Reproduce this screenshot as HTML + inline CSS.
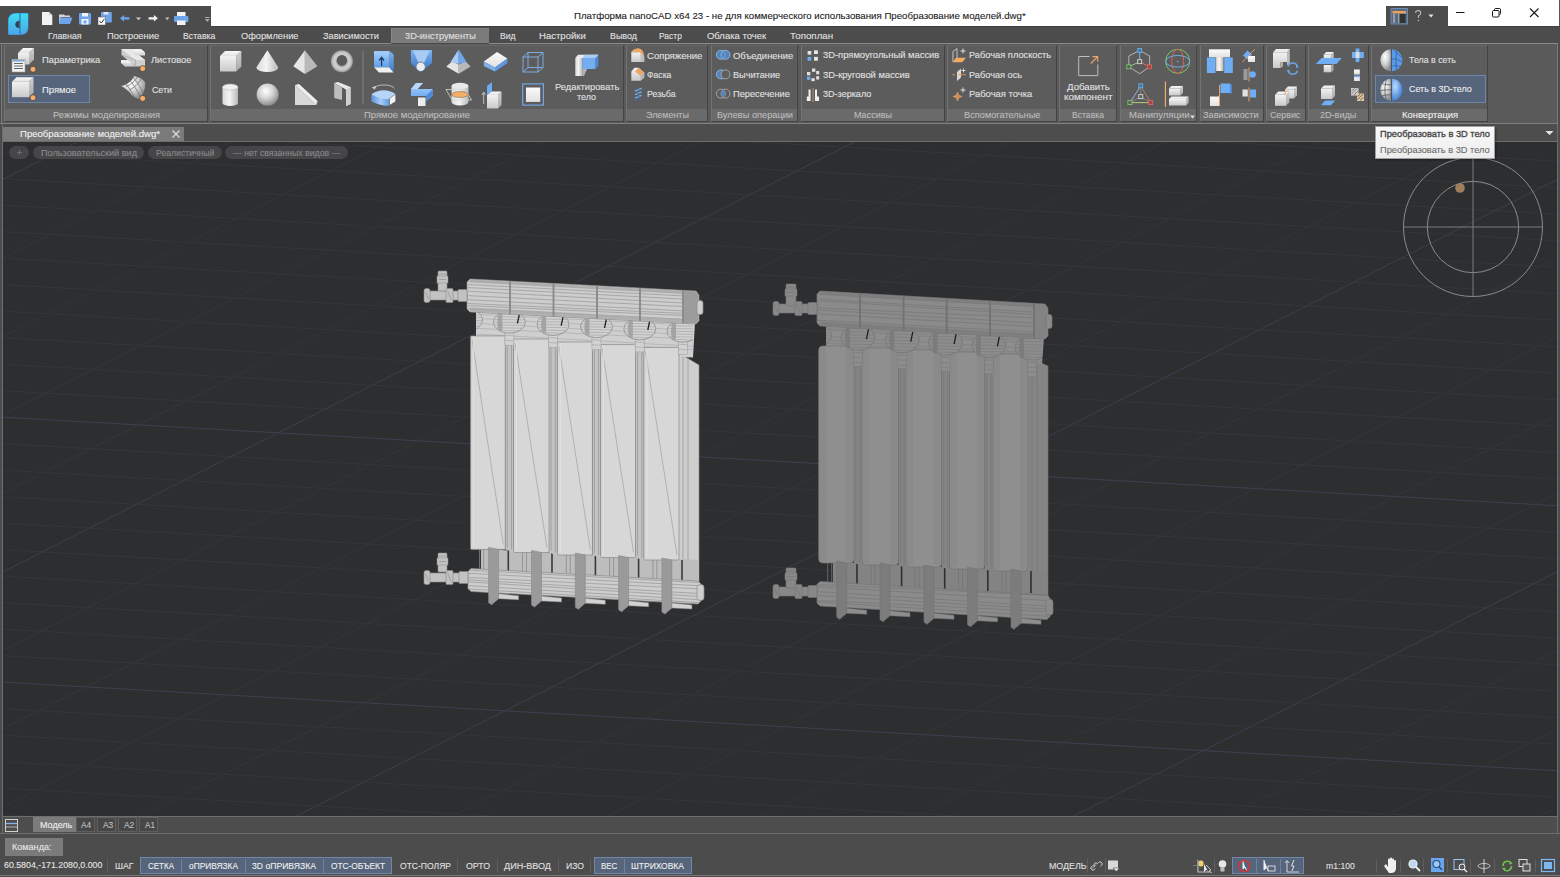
<!DOCTYPE html>
<html><head><meta charset="utf-8"><style>
html,body{margin:0;padding:0;width:1560px;height:877px;overflow:hidden;background:#4c4c4c;}
body>div,body>svg{position:absolute;}
.t{position:absolute;white-space:pre;line-height:14px;height:14px;font-family:"Liberation Sans",sans-serif;transform-origin:0 0;-webkit-text-stroke:0.1px currentColor;}
</style></head><body>
<div style="left:0px;top:0px;width:1560px;height:26px;background:#ffffff;"></div>
<div style="left:0px;top:6px;width:211px;height:20px;background:#4c4c4c;"></div>
<div style="left:1386px;top:6px;width:62px;height:20px;background:#4c4c4c;"></div>
<div style="left:1559px;top:0px;width:1px;height:44px;background:#5a5a5a;"></div>
<div style="left:0px;top:26px;width:1560px;height:18px;background:#4c4c4c;"></div>
<div style="left:211px;top:26px;width:1175px;height:1px;background:#404040;"></div>
<div style="left:1448px;top:26px;width:112px;height:1px;background:#404040;"></div>
<div style="left:391px;top:28px;width:98px;height:16px;background:#7b7b7b;box-sizing:border-box;border-left:1px solid #888;border-top:1px solid #828282"></div>
<div style="left:0px;top:43px;width:1560px;height:81px;background:#4c4c4c;"></div>
<div style="left:1px;top:44px;width:1557px;height:79px;background:#5a5a5a;"></div>
<div style="left:0px;top:43px;width:391px;height:1px;background:#8a8a8a;"></div>
<div style="left:489px;top:43px;width:1069px;height:1px;background:#8a8a8a;"></div>
<div style="left:1px;top:43px;width:1px;height:81px;background:#7a7a7a;"></div>
<div style="left:1557px;top:43px;width:1px;height:81px;background:#7a7a7a;"></div>
<div style="left:0px;top:123px;width:1558px;height:1px;background:#808080;"></div>
<div style="left:4px;top:45px;width:204px;height:77px;background:#5c5c5c;box-sizing:border-box;border:1px solid #444;border-left-color:#737373;border-top-color:#666"></div>
<div style="left:5px;top:109px;width:202px;height:12px;background:#6a6a6a;"></div>
<div style="left:210px;top:45px;width:414px;height:77px;background:#5c5c5c;box-sizing:border-box;border:1px solid #444;border-left-color:#737373;border-top-color:#666"></div>
<div style="left:211px;top:109px;width:412px;height:12px;background:#6a6a6a;"></div>
<div style="left:626px;top:45px;width:82px;height:77px;background:#5c5c5c;box-sizing:border-box;border:1px solid #444;border-left-color:#737373;border-top-color:#666"></div>
<div style="left:627px;top:109px;width:80px;height:12px;background:#6a6a6a;"></div>
<div style="left:711px;top:45px;width:87px;height:77px;background:#5c5c5c;box-sizing:border-box;border:1px solid #444;border-left-color:#737373;border-top-color:#666"></div>
<div style="left:712px;top:109px;width:85px;height:12px;background:#6a6a6a;"></div>
<div style="left:801px;top:45px;width:144px;height:77px;background:#5c5c5c;box-sizing:border-box;border:1px solid #444;border-left-color:#737373;border-top-color:#666"></div>
<div style="left:802px;top:109px;width:142px;height:12px;background:#6a6a6a;"></div>
<div style="left:947px;top:45px;width:110px;height:77px;background:#5c5c5c;box-sizing:border-box;border:1px solid #444;border-left-color:#737373;border-top-color:#666"></div>
<div style="left:948px;top:109px;width:108px;height:12px;background:#6a6a6a;"></div>
<div style="left:1059px;top:45px;width:58px;height:77px;background:#5c5c5c;box-sizing:border-box;border:1px solid #444;border-left-color:#737373;border-top-color:#666"></div>
<div style="left:1060px;top:109px;width:56px;height:12px;background:#6a6a6a;"></div>
<div style="left:1120px;top:45px;width:77px;height:77px;background:#5c5c5c;box-sizing:border-box;border:1px solid #444;border-left-color:#737373;border-top-color:#666"></div>
<div style="left:1121px;top:109px;width:75px;height:12px;background:#6a6a6a;"></div>
<div style="left:1200px;top:45px;width:64px;height:77px;background:#5c5c5c;box-sizing:border-box;border:1px solid #444;border-left-color:#737373;border-top-color:#666"></div>
<div style="left:1201px;top:109px;width:62px;height:12px;background:#6a6a6a;"></div>
<div style="left:1266px;top:45px;width:40px;height:77px;background:#5c5c5c;box-sizing:border-box;border:1px solid #444;border-left-color:#737373;border-top-color:#666"></div>
<div style="left:1267px;top:109px;width:38px;height:12px;background:#6a6a6a;"></div>
<div style="left:1308px;top:45px;width:61px;height:77px;background:#5c5c5c;box-sizing:border-box;border:1px solid #444;border-left-color:#737373;border-top-color:#666"></div>
<div style="left:1309px;top:109px;width:59px;height:12px;background:#6a6a6a;"></div>
<div style="left:1371px;top:45px;width:117px;height:77px;background:#5c5c5c;box-sizing:border-box;border:1px solid #444;border-left-color:#737373;border-top-color:#666"></div>
<div style="left:1372px;top:109px;width:115px;height:12px;background:#6a6a6a;"></div>
<div style="left:8px;top:75px;width:82px;height:28px;background:#56657b;box-sizing:border-box;border:1px solid #6d86a8"></div>
<div style="left:1375px;top:75px;width:111px;height:28px;background:#56657b;box-sizing:border-box;border:1px solid #6d86a8"></div>
<div style="left:0px;top:124px;width:1560px;height:18px;background:#4d4d4d;"></div>
<div style="left:3px;top:127px;width:181px;height:14px;background:#7b7b7b;"></div>
<div style="left:0px;top:141px;width:1560px;height:676px;background:#4c4c4c;"></div>
<div style="left:3px;top:142px;width:1554px;height:674px;background:#2c2e30;"></div>
<svg width="1555" height="674" viewBox="3 142 1555 674" style="position:absolute;left:3px;top:142px"><path d="M0.0 -139.5L1560.0 -50.6" stroke="#35373b" stroke-width="0.9" opacity="1"/><path d="M0.0 -113.0L1560.0 -24.1" stroke="#35373b" stroke-width="0.9" opacity="1"/><path d="M0.0 -86.5L1560.0 2.4" stroke="#35373b" stroke-width="0.9" opacity="1"/><path d="M0.0 -60.0L1560.0 28.9" stroke="#35373b" stroke-width="0.9" opacity="1"/><path d="M0.0 -33.5L1560.0 55.4" stroke="#35373b" stroke-width="0.9" opacity="1"/><path d="M0.0 -7.0L1560.0 81.9" stroke="#35373b" stroke-width="0.9" opacity="1"/><path d="M0.0 19.5L1560.0 108.4" stroke="#35373b" stroke-width="0.9" opacity="1"/><path d="M0.0 46.0L1560.0 134.9" stroke="#35373b" stroke-width="0.9" opacity="1"/><path d="M0.0 72.5L1560.0 161.4" stroke="#35373b" stroke-width="0.9" opacity="1"/><path d="M0.0 99.0L1560.0 187.9" stroke="#35373b" stroke-width="0.9" opacity="1"/><path d="M0.0 125.5L1560.0 214.4" stroke="#35373b" stroke-width="0.9" opacity="1"/><path d="M0.0 152.0L1560.0 240.9" stroke="#35373b" stroke-width="0.9" opacity="1"/><path d="M0.0 178.5L1560.0 267.4" stroke="#35373b" stroke-width="0.9" opacity="1"/><path d="M0.0 205.0L1560.0 293.9" stroke="#35373b" stroke-width="0.9" opacity="1"/><path d="M0.0 231.5L1560.0 320.4" stroke="#35373b" stroke-width="0.9" opacity="1"/><path d="M0.0 258.0L1560.0 346.9" stroke="#35373b" stroke-width="0.9" opacity="1"/><path d="M0.0 284.5L1560.0 373.4" stroke="#35373b" stroke-width="0.9" opacity="1"/><path d="M0.0 311.0L1560.0 399.9" stroke="#35373b" stroke-width="0.9" opacity="1"/><path d="M0.0 337.5L1560.0 426.4" stroke="#35373b" stroke-width="0.9" opacity="1"/><path d="M0.0 364.0L1560.0 452.9" stroke="#35373b" stroke-width="0.9" opacity="1"/><path d="M0.0 390.5L1560.0 479.4" stroke="#35373b" stroke-width="0.9" opacity="1"/><path d="M0.0 417.0L1560.0 505.9" stroke="#3e4454" stroke-width="0.9" opacity="1"/><path d="M0.0 443.5L1560.0 532.4" stroke="#35373b" stroke-width="0.9" opacity="1"/><path d="M0.0 470.0L1560.0 558.9" stroke="#35373b" stroke-width="0.9" opacity="1"/><path d="M0.0 496.5L1560.0 585.4" stroke="#35373b" stroke-width="0.9" opacity="1"/><path d="M0.0 523.0L1560.0 611.9" stroke="#35373b" stroke-width="0.9" opacity="1"/><path d="M0.0 549.5L1560.0 638.4" stroke="#35373b" stroke-width="0.9" opacity="1"/><path d="M0.0 576.0L1560.0 664.9" stroke="#35373b" stroke-width="0.9" opacity="1"/><path d="M0.0 602.5L1560.0 691.4" stroke="#35373b" stroke-width="0.9" opacity="1"/><path d="M0.0 629.0L1560.0 717.9" stroke="#35373b" stroke-width="0.9" opacity="1"/><path d="M0.0 655.5L1560.0 744.4" stroke="#35373b" stroke-width="0.9" opacity="1"/><path d="M0.0 682.0L1560.0 770.9" stroke="#3e4454" stroke-width="0.9" opacity="1"/><path d="M0.0 708.5L1560.0 797.4" stroke="#35373b" stroke-width="0.9" opacity="1"/><path d="M0.0 735.0L1560.0 823.9" stroke="#35373b" stroke-width="0.9" opacity="1"/><path d="M0.0 761.5L1560.0 850.4" stroke="#35373b" stroke-width="0.9" opacity="1"/><path d="M0.0 788.0L1560.0 876.9" stroke="#35373b" stroke-width="0.9" opacity="1"/><path d="M0.0 814.5L1560.0 903.4" stroke="#35373b" stroke-width="0.9" opacity="1"/><path d="M0.0 841.0L1560.0 929.9" stroke="#35373b" stroke-width="0.9" opacity="1"/><path d="M0.0 867.5L1560.0 956.4" stroke="#35373b" stroke-width="0.9" opacity="1"/><path d="M0.0 894.0L1560.0 982.9" stroke="#35373b" stroke-width="0.9" opacity="1"/><path d="M0.0 920.5L1560.0 1009.4" stroke="#35373b" stroke-width="0.9" opacity="1"/><path d="M0.0 947.0L1560.0 1035.9" stroke="#35373b" stroke-width="0.9" opacity="1"/><path d="M0.0 -211.7L1560.0 -999.5" stroke="#3c4150" stroke-width="0.9" opacity="1"/><path d="M0.0 -133.2L1560.0 -921.0" stroke="#35373b" stroke-width="0.9" opacity="1"/><path d="M0.0 -54.7L1560.0 -842.5" stroke="#35373b" stroke-width="0.9" opacity="1"/><path d="M0.0 23.8L1560.0 -764.0" stroke="#35373b" stroke-width="0.9" opacity="1"/><path d="M0.0 102.3L1560.0 -685.5" stroke="#35373b" stroke-width="0.9" opacity="1"/><path d="M0.0 180.8L1560.0 -607.0" stroke="#3c4150" stroke-width="0.9" opacity="1"/><path d="M0.0 259.3L1560.0 -528.5" stroke="#35373b" stroke-width="0.9" opacity="1"/><path d="M0.0 337.8L1560.0 -450.0" stroke="#35373b" stroke-width="0.9" opacity="1"/><path d="M0.0 416.3L1560.0 -371.5" stroke="#35373b" stroke-width="0.9" opacity="1"/><path d="M0.0 494.8L1560.0 -293.0" stroke="#35373b" stroke-width="0.9" opacity="1"/><path d="M0.0 573.3L1560.0 -214.5" stroke="#3c4150" stroke-width="0.9" opacity="1"/><path d="M0.0 651.8L1560.0 -136.0" stroke="#35373b" stroke-width="0.9" opacity="1"/><path d="M0.0 730.3L1560.0 -57.5" stroke="#35373b" stroke-width="0.9" opacity="1"/><path d="M0.0 808.8L1560.0 21.0" stroke="#35373b" stroke-width="0.9" opacity="1"/><path d="M0.0 887.3L1560.0 99.5" stroke="#35373b" stroke-width="0.9" opacity="1"/><path d="M0.0 965.8L1560.0 178.0" stroke="#3c4150" stroke-width="0.9" opacity="1"/><path d="M0.0 1044.3L1560.0 256.5" stroke="#35373b" stroke-width="0.9" opacity="1"/><path d="M0.0 1122.8L1560.0 335.0" stroke="#35373b" stroke-width="0.9" opacity="1"/><path d="M0.0 1201.3L1560.0 413.5" stroke="#35373b" stroke-width="0.9" opacity="1"/><path d="M0.0 1279.8L1560.0 492.0" stroke="#35373b" stroke-width="0.9" opacity="1"/><path d="M0.0 1358.3L1560.0 570.5" stroke="#3c4150" stroke-width="0.9" opacity="1"/><path d="M0.0 1436.8L1560.0 649.0" stroke="#35373b" stroke-width="0.9" opacity="1"/><path d="M0.0 1515.3L1560.0 727.5" stroke="#35373b" stroke-width="0.9" opacity="1"/><path d="M0.0 1593.8L1560.0 806.0" stroke="#35373b" stroke-width="0.9" opacity="1"/><path d="M0.0 1672.3L1560.0 884.5" stroke="#35373b" stroke-width="0.9" opacity="1"/><path d="M0.0 1750.8L1560.0 963.0" stroke="#3c4150" stroke-width="0.9" opacity="1"/><path d="M0.0 1829.3L1560.0 1041.5" stroke="#35373b" stroke-width="0.9" opacity="1"/><path d="M0.0 1907.8L1560.0 1120.0" stroke="#35373b" stroke-width="0.9" opacity="1"/><path d="M0.0 1986.3L1560.0 1198.5" stroke="#35373b" stroke-width="0.9" opacity="1"/><path d="M0.0 2064.8L1560.0 1277.0" stroke="#35373b" stroke-width="0.9" opacity="1"/><path d="M0.0 2143.3L1560.0 1355.5" stroke="#3c4150" stroke-width="0.9" opacity="1"/><path d="M0.0 2221.8L1560.0 1434.0" stroke="#35373b" stroke-width="0.9" opacity="1"/><path d="M0.0 2300.3L1560.0 1512.5" stroke="#35373b" stroke-width="0.9" opacity="1"/><path d="M0.0 2378.8L1560.0 1591.0" stroke="#35373b" stroke-width="0.9" opacity="1"/><path d="M0.0 2457.3L1560.0 1669.5" stroke="#35373b" stroke-width="0.9" opacity="1"/><path d="M0.0 2535.8L1560.0 1748.0" stroke="#3c4150" stroke-width="0.9" opacity="1"/><path d="M0.0 2614.3L1560.0 1826.5" stroke="#35373b" stroke-width="0.9" opacity="1"/><path d="M0.0 2692.8L1560.0 1905.0" stroke="#35373b" stroke-width="0.9" opacity="1"/><path d="M0.0 2771.3L1560.0 1983.5" stroke="#35373b" stroke-width="0.9" opacity="1"/><path d="M0.0 2849.8L1560.0 2062.0" stroke="#35373b" stroke-width="0.9" opacity="1"/><path d="M0.0 2928.3L1560.0 2140.5" stroke="#3c4150" stroke-width="0.9" opacity="1"/><path d="M0.0 3006.8L1560.0 2219.0" stroke="#35373b" stroke-width="0.9" opacity="1"/><path d="M0.0 3085.3L1560.0 2297.5" stroke="#35373b" stroke-width="0.9" opacity="1"/><path d="M0.0 3163.8L1560.0 2376.0" stroke="#35373b" stroke-width="0.9" opacity="1"/><path d="M0.0 3242.3L1560.0 2454.5" stroke="#35373b" stroke-width="0.9" opacity="1"/></svg>
<svg width="1560" height="877" viewBox="0 0 1560 877" style="position:absolute;left:0;top:0"><path d="M677.0 352.0L699.0 365.0L699.0 598.0L677.0 600.0Z" fill="#cecece" stroke="#8a8a8a" stroke-width="0.6" /><path d="M683.0 354.0L683.0 596.0" stroke="#8a8a8a" stroke-width="0.6" opacity="1"/><path d="M688.0 356.0L688.0 596.0" stroke="#8a8a8a" stroke-width="0.6" opacity="1"/><path d="M476.0 310.0L695.0 322.0L693.0 357.4L476.0 345.9Z" fill="#cfcfcf" stroke="none" stroke-width="0.6" /><path d="M477.0 314.3L693.0 325.3" stroke="#8e8e8e" stroke-width="0.6" opacity="0.6"/><path d="M477.0 318.4L693.0 330.5" stroke="#8e8e8e" stroke-width="0.6" opacity="0.6"/><path d="M477.0 323.5L693.0 334.9" stroke="#8e8e8e" stroke-width="0.6" opacity="0.6"/><path d="M477.0 328.4L693.0 339.3" stroke="#8e8e8e" stroke-width="0.6" opacity="0.6"/><path d="M477.0 334.1L693.0 346.3" stroke="#8e8e8e" stroke-width="0.6" opacity="0.6"/><path d="M477.0 337.5L693.0 349.5" stroke="#8e8e8e" stroke-width="0.6" opacity="0.6"/><path d="M481.0 549.0L699.0 560.0L699.0 590.0L481.0 580.0Z" fill="#bdbdbd" stroke="none" stroke-width="0.6" /><path d="M508.3 549.4L508.3 571.4" stroke="#3a3a3a" stroke-width="1.6" opacity="1"/><path d="M479.6 549.4L479.6 569.4" stroke="#8a8a8a" stroke-width="0.8" opacity="1"/><path d="M483.6 549.4L483.6 569.4" stroke="#8a8a8a" stroke-width="0.8" opacity="1"/><path d="M552.0 552.5L552.0 574.5" stroke="#3a3a3a" stroke-width="1.6" opacity="1"/><path d="M522.5 552.5L522.5 572.5" stroke="#8a8a8a" stroke-width="0.8" opacity="1"/><path d="M526.5 552.5L526.5 572.5" stroke="#8a8a8a" stroke-width="0.8" opacity="1"/><path d="M595.4 555.0L595.4 577.0" stroke="#3a3a3a" stroke-width="1.6" opacity="1"/><path d="M566.3 555.0L566.3 575.0" stroke="#8a8a8a" stroke-width="0.8" opacity="1"/><path d="M570.3 555.0L570.3 575.0" stroke="#8a8a8a" stroke-width="0.8" opacity="1"/><path d="M638.6 557.5L638.6 579.5" stroke="#3a3a3a" stroke-width="1.6" opacity="1"/><path d="M609.6 557.5L609.6 577.5" stroke="#8a8a8a" stroke-width="0.8" opacity="1"/><path d="M613.6 557.5L613.6 577.5" stroke="#8a8a8a" stroke-width="0.8" opacity="1"/><path d="M682.0 560.0L682.0 582.0" stroke="#3a3a3a" stroke-width="1.6" opacity="1"/><path d="M652.9 560.0L652.9 580.0" stroke="#8a8a8a" stroke-width="0.8" opacity="1"/><path d="M656.9 560.0L656.9 580.0" stroke="#8a8a8a" stroke-width="0.8" opacity="1"/><path d="M505.3 333.0L513.5 339.0L513.5 552.4L505.3 549.4Z" fill="#c3c3c3" stroke="none" stroke-width="0.6" /><path d="M507.3 343.0L507.3 547.4" stroke="#8a8a8a" stroke-width="0.6" opacity="1"/><path d="M511.5 343.0L511.5 549.4" stroke="#8a8a8a" stroke-width="0.6" opacity="1"/><path d="M549.0 336.0L557.3 342.0L557.3 555.5L549.0 552.5Z" fill="#c3c3c3" stroke="none" stroke-width="0.6" /><path d="M551.0 346.0L551.0 550.5" stroke="#8a8a8a" stroke-width="0.6" opacity="1"/><path d="M555.3 346.0L555.3 552.5" stroke="#8a8a8a" stroke-width="0.6" opacity="1"/><path d="M592.4 338.6L600.6 344.6L600.6 558.0L592.4 555.0Z" fill="#c3c3c3" stroke="none" stroke-width="0.6" /><path d="M594.4 348.6L594.4 553.0" stroke="#8a8a8a" stroke-width="0.6" opacity="1"/><path d="M598.6 348.6L598.6 555.0" stroke="#8a8a8a" stroke-width="0.6" opacity="1"/><path d="M635.6 341.4L643.9 347.4L643.9 560.5L635.6 557.5Z" fill="#c3c3c3" stroke="none" stroke-width="0.6" /><path d="M637.6 351.4L637.6 555.5" stroke="#8a8a8a" stroke-width="0.6" opacity="1"/><path d="M641.9 351.4L641.9 557.5" stroke="#8a8a8a" stroke-width="0.6" opacity="1"/><rect x="470.6" y="335.9" width="34.7" height="213.5" rx="1" fill="#d7d7d7" stroke="#8a8a8a" stroke-width="0.7"/><path d="M472.1 339.9L503.3 544.4" stroke="#8a8a8a" stroke-width="0.5" opacity="1"/><path d="M473.6 338.9L473.6 546.4" stroke="#e4e4e4" stroke-width="1.0" opacity="0.8"/><rect x="513.5" y="339.0" width="35.5" height="213.5" rx="1" fill="#d7d7d7" stroke="#8a8a8a" stroke-width="0.7"/><path d="M515.0 343.0L547.0 547.5" stroke="#8a8a8a" stroke-width="0.5" opacity="1"/><path d="M516.5 342.0L516.5 549.5" stroke="#e4e4e4" stroke-width="1.0" opacity="0.8"/><rect x="557.3" y="342.0" width="35.1" height="213.0" rx="1" fill="#d7d7d7" stroke="#8a8a8a" stroke-width="0.7"/><path d="M558.8 346.0L590.4 550.0" stroke="#8a8a8a" stroke-width="0.5" opacity="1"/><path d="M560.3 345.0L560.3 552.0" stroke="#e4e4e4" stroke-width="1.0" opacity="0.8"/><rect x="600.6" y="344.6" width="35.0" height="212.9" rx="1" fill="#d7d7d7" stroke="#8a8a8a" stroke-width="0.7"/><path d="M602.1 348.6L633.6 552.5" stroke="#8a8a8a" stroke-width="0.5" opacity="1"/><path d="M603.6 347.6L603.6 554.5" stroke="#e4e4e4" stroke-width="1.0" opacity="0.8"/><rect x="643.9" y="347.4" width="35.1" height="212.6" rx="1" fill="#d7d7d7" stroke="#8a8a8a" stroke-width="0.7"/><path d="M645.4 351.4L677.0 555.0" stroke="#8a8a8a" stroke-width="0.5" opacity="1"/><path d="M646.9 350.4L646.9 557.0" stroke="#e4e4e4" stroke-width="1.0" opacity="0.8"/><clipPath id="nc11"><rect x="476" y="279" width="217" height="120"/></clipPath><g clip-path="url(#nc11)"><rect x="462.1" y="320.0" width="9" height="23.0" fill="#d2d2d2" stroke="#8a8a8a" stroke-width="0.5" stroke-opacity="0.7"/><path d="M462.1 333.0L471.1 333.6" stroke="#8e8e8e" stroke-width="0.6" opacity="0.7"/><path d="M462.1 338.0L471.1 338.6" stroke="#8e8e8e" stroke-width="0.6" opacity="0.7"/><ellipse cx="466.6" cy="320.0" rx="16" ry="11" fill="#d2d2d2" stroke="#8a8a8a" stroke-width="0.8"/><path d="M457.0 311.7L476.2 312.2" stroke="#8e8e8e" stroke-width="0.6" opacity="0.75"/><path d="M453.7 314.5L479.5 315.0" stroke="#8e8e8e" stroke-width="0.6" opacity="0.75"/><path d="M452.1 317.2L481.1 317.7" stroke="#8e8e8e" stroke-width="0.6" opacity="0.75"/><path d="M451.6 320.0L481.6 320.5" stroke="#8e8e8e" stroke-width="0.6" opacity="0.75"/><path d="M452.1 322.7L481.1 323.2" stroke="#8e8e8e" stroke-width="0.6" opacity="0.75"/><path d="M453.7 325.5L479.5 326.0" stroke="#8e8e8e" stroke-width="0.6" opacity="0.75"/><path d="M457.0 328.2L476.2 328.7" stroke="#8e8e8e" stroke-width="0.6" opacity="0.75"/><path d="M455.6 312.0Q453.6 320.0 455.6 328.0H459.6V312.0Z" fill="#a0a0a0" opacity="0.9"/><rect x="504.9" y="322.2" width="9" height="23.0" fill="#d2d2d2" stroke="#8a8a8a" stroke-width="0.5" stroke-opacity="0.7"/><path d="M504.9 335.2L513.9 335.8" stroke="#8e8e8e" stroke-width="0.6" opacity="0.7"/><path d="M504.9 340.2L513.9 340.8" stroke="#8e8e8e" stroke-width="0.6" opacity="0.7"/><ellipse cx="509.4" cy="322.2" rx="16" ry="11" fill="#d2d2d2" stroke="#8a8a8a" stroke-width="0.8"/><path d="M499.8 313.9L519.0 314.4" stroke="#8e8e8e" stroke-width="0.6" opacity="0.75"/><path d="M496.5 316.7L522.3 317.2" stroke="#8e8e8e" stroke-width="0.6" opacity="0.75"/><path d="M494.9 319.4L523.9 319.9" stroke="#8e8e8e" stroke-width="0.6" opacity="0.75"/><path d="M494.4 322.2L524.4 322.7" stroke="#8e8e8e" stroke-width="0.6" opacity="0.75"/><path d="M494.9 324.9L523.9 325.4" stroke="#8e8e8e" stroke-width="0.6" opacity="0.75"/><path d="M496.5 327.7L522.3 328.2" stroke="#8e8e8e" stroke-width="0.6" opacity="0.75"/><path d="M499.8 330.4L519.0 330.9" stroke="#8e8e8e" stroke-width="0.6" opacity="0.75"/><path d="M498.4 314.2Q496.4 322.2 498.4 330.2H502.4V314.2Z" fill="#a0a0a0" opacity="0.9"/><path d="M519.3 314.5L517.4 323.3" stroke="#1e1e1e" stroke-width="1.3" opacity="1"/><rect x="548.6" y="324.5" width="9" height="23.0" fill="#d2d2d2" stroke="#8a8a8a" stroke-width="0.5" stroke-opacity="0.7"/><path d="M548.6 337.5L557.6 338.1" stroke="#8e8e8e" stroke-width="0.6" opacity="0.7"/><path d="M548.6 342.5L557.6 343.1" stroke="#8e8e8e" stroke-width="0.6" opacity="0.7"/><ellipse cx="553.1" cy="324.5" rx="16" ry="11" fill="#d2d2d2" stroke="#8a8a8a" stroke-width="0.8"/><path d="M543.6 316.2L562.7 316.7" stroke="#8e8e8e" stroke-width="0.6" opacity="0.75"/><path d="M540.3 319.0L566.0 319.5" stroke="#8e8e8e" stroke-width="0.6" opacity="0.75"/><path d="M538.7 321.7L567.6 322.2" stroke="#8e8e8e" stroke-width="0.6" opacity="0.75"/><path d="M538.1 324.5L568.1 325.0" stroke="#8e8e8e" stroke-width="0.6" opacity="0.75"/><path d="M538.7 327.2L567.6 327.7" stroke="#8e8e8e" stroke-width="0.6" opacity="0.75"/><path d="M540.3 330.0L566.0 330.5" stroke="#8e8e8e" stroke-width="0.6" opacity="0.75"/><path d="M543.6 332.7L562.7 333.2" stroke="#8e8e8e" stroke-width="0.6" opacity="0.75"/><path d="M542.1 316.5Q540.1 324.5 542.1 332.5H546.1V316.5Z" fill="#a0a0a0" opacity="0.9"/><path d="M563.1 316.8L561.1 325.6" stroke="#1e1e1e" stroke-width="1.3" opacity="1"/><rect x="592.0" y="326.7" width="9" height="23.0" fill="#d2d2d2" stroke="#8a8a8a" stroke-width="0.5" stroke-opacity="0.7"/><path d="M592.0 339.7L601.0 340.3" stroke="#8e8e8e" stroke-width="0.6" opacity="0.7"/><path d="M592.0 344.7L601.0 345.3" stroke="#8e8e8e" stroke-width="0.6" opacity="0.7"/><ellipse cx="596.5" cy="326.7" rx="16" ry="11" fill="#d2d2d2" stroke="#8a8a8a" stroke-width="0.8"/><path d="M586.9 318.4L606.1 318.9" stroke="#8e8e8e" stroke-width="0.6" opacity="0.75"/><path d="M583.6 321.2L609.4 321.7" stroke="#8e8e8e" stroke-width="0.6" opacity="0.75"/><path d="M582.0 323.9L611.0 324.4" stroke="#8e8e8e" stroke-width="0.6" opacity="0.75"/><path d="M581.5 326.7L611.5 327.2" stroke="#8e8e8e" stroke-width="0.6" opacity="0.75"/><path d="M582.0 329.4L611.0 329.9" stroke="#8e8e8e" stroke-width="0.6" opacity="0.75"/><path d="M583.6 332.2L609.4 332.7" stroke="#8e8e8e" stroke-width="0.6" opacity="0.75"/><path d="M586.9 334.9L606.1 335.4" stroke="#8e8e8e" stroke-width="0.6" opacity="0.75"/><path d="M585.5 318.7Q583.5 326.7 585.5 334.7H589.5V318.7Z" fill="#a0a0a0" opacity="0.9"/><path d="M606.4 319.0L604.5 327.8" stroke="#1e1e1e" stroke-width="1.3" opacity="1"/><rect x="635.2" y="328.9" width="9" height="23.0" fill="#d2d2d2" stroke="#8a8a8a" stroke-width="0.5" stroke-opacity="0.7"/><path d="M635.2 341.9L644.2 342.5" stroke="#8e8e8e" stroke-width="0.6" opacity="0.7"/><path d="M635.2 346.9L644.2 347.5" stroke="#8e8e8e" stroke-width="0.6" opacity="0.7"/><ellipse cx="639.8" cy="328.9" rx="16" ry="11" fill="#d2d2d2" stroke="#8a8a8a" stroke-width="0.8"/><path d="M630.2 320.7L649.3 321.2" stroke="#8e8e8e" stroke-width="0.6" opacity="0.75"/><path d="M626.9 323.4L652.6 323.9" stroke="#8e8e8e" stroke-width="0.6" opacity="0.75"/><path d="M625.3 326.2L654.2 326.7" stroke="#8e8e8e" stroke-width="0.6" opacity="0.75"/><path d="M624.8 328.9L654.8 329.4" stroke="#8e8e8e" stroke-width="0.6" opacity="0.75"/><path d="M625.3 331.7L654.2 332.2" stroke="#8e8e8e" stroke-width="0.6" opacity="0.75"/><path d="M626.9 334.4L652.6 334.9" stroke="#8e8e8e" stroke-width="0.6" opacity="0.75"/><path d="M630.2 337.2L649.3 337.7" stroke="#8e8e8e" stroke-width="0.6" opacity="0.75"/><path d="M628.8 320.9Q626.8 328.9 628.8 336.9H632.8V320.9Z" fill="#a0a0a0" opacity="0.9"/><path d="M649.7 321.2L647.8 330.0" stroke="#1e1e1e" stroke-width="1.3" opacity="1"/><rect x="678.5" y="331.2" width="9" height="23.0" fill="#d2d2d2" stroke="#8a8a8a" stroke-width="0.5" stroke-opacity="0.7"/><path d="M678.5 344.2L687.5 344.8" stroke="#8e8e8e" stroke-width="0.6" opacity="0.7"/><path d="M678.5 349.2L687.5 349.8" stroke="#8e8e8e" stroke-width="0.6" opacity="0.7"/><ellipse cx="683.0" cy="331.2" rx="16" ry="11" fill="#d2d2d2" stroke="#8a8a8a" stroke-width="0.8"/><path d="M673.4 322.9L692.6 323.4" stroke="#8e8e8e" stroke-width="0.6" opacity="0.75"/><path d="M670.1 325.7L695.9 326.2" stroke="#8e8e8e" stroke-width="0.6" opacity="0.75"/><path d="M668.5 328.4L697.5 328.9" stroke="#8e8e8e" stroke-width="0.6" opacity="0.75"/><path d="M668.0 331.2L698.0 331.7" stroke="#8e8e8e" stroke-width="0.6" opacity="0.75"/><path d="M668.5 333.9L697.5 334.4" stroke="#8e8e8e" stroke-width="0.6" opacity="0.75"/><path d="M670.1 336.7L695.9 337.2" stroke="#8e8e8e" stroke-width="0.6" opacity="0.75"/><path d="M673.4 339.4L692.6 339.9" stroke="#8e8e8e" stroke-width="0.6" opacity="0.75"/><path d="M672.0 323.2Q670.0 331.2 672.0 339.2H676.0V323.2Z" fill="#a0a0a0" opacity="0.9"/></g><path d="M470.0 279.0L696.0 291.0L699.0 295.0L699.0 321.0L696.0 324.0L470.0 312.0L467.0 309.0L467.0 282.0Z" fill="#cdcdcd" stroke="#8a8a8a" stroke-width="0.7" /><path d="M468.0 280.9L698.0 294.0" stroke="#8e8e8e" stroke-width="0.7" opacity="0.85"/><path d="M468.0 284.5L698.0 296.7" stroke="#8e8e8e" stroke-width="0.7" opacity="0.85"/><path d="M468.0 287.6L698.0 299.9" stroke="#8e8e8e" stroke-width="0.7" opacity="0.85"/><path d="M468.0 291.2L698.0 303.8" stroke="#8e8e8e" stroke-width="0.7" opacity="0.85"/><path d="M468.0 295.6L698.0 307.3" stroke="#8e8e8e" stroke-width="0.7" opacity="0.85"/><path d="M468.0 299.7L698.0 311.7" stroke="#8e8e8e" stroke-width="0.7" opacity="0.85"/><path d="M468.0 303.5L698.0 314.1" stroke="#8e8e8e" stroke-width="0.7" opacity="0.85"/><path d="M468.0 305.6L698.0 316.2" stroke="#8e8e8e" stroke-width="0.7" opacity="0.85"/><path d="M468.0 308.8L698.0 320.1" stroke="#8e8e8e" stroke-width="0.7" opacity="0.85"/><path d="M470.0 279.5L696.0 291.5L696.0 294.5L470.0 282.5Z" fill="#a9a9a9" stroke="none" stroke-width="0" opacity="0.8"/><path d="M470.0 307.5L696.0 319.5L696.0 323.5L470.0 311.5Z" fill="#a9a9a9" stroke="none" stroke-width="0" opacity="0.8"/><path d="M683.0 290.7L696.0 291.5L698.5 295.0L698.5 321.0L696.0 323.5L683.0 322.7Z" fill="#9c9c9c" stroke="none" stroke-width="0.6" /><path d="M510.0 281.2L510.0 314.2" stroke="#8c8c8c" stroke-width="2.0" opacity="1"/><path d="M553.5 283.5L553.5 316.5" stroke="#8c8c8c" stroke-width="2.0" opacity="1"/><path d="M597.0 285.7L597.0 318.7" stroke="#8c8c8c" stroke-width="2.0" opacity="1"/><path d="M640.0 287.9L640.0 320.9" stroke="#8c8c8c" stroke-width="2.0" opacity="1"/><path d="M683.0 290.2L683.0 323.2" stroke="#8c8c8c" stroke-width="2.0" opacity="1"/><rect x="697.0" y="300.5" width="6" height="14" rx="2.5" fill="#cdcdcd" stroke="#8a8a8a" stroke-width="0.7"/><path d="M471.0 568.5L698.0 581.0L701.0 584.0L701.0 601.0L698.0 604.0L471.0 591.5L468.0 588.5L468.0 571.5Z" fill="#cdcdcd" stroke="#8a8a8a" stroke-width="0.7" /><path d="M469.0 570.2L700.0 582.6" stroke="#8e8e8e" stroke-width="0.7" opacity="0.85"/><path d="M469.0 573.3L700.0 585.8" stroke="#8e8e8e" stroke-width="0.7" opacity="0.85"/><path d="M469.0 577.5L700.0 588.9" stroke="#8e8e8e" stroke-width="0.7" opacity="0.85"/><path d="M469.0 579.9L700.0 593.6" stroke="#8e8e8e" stroke-width="0.7" opacity="0.85"/><path d="M469.0 581.9L700.0 596.5" stroke="#8e8e8e" stroke-width="0.7" opacity="0.85"/><path d="M469.0 585.7L700.0 599.8" stroke="#8e8e8e" stroke-width="0.7" opacity="0.85"/><path d="M469.0 589.0L700.0 602.7" stroke="#8e8e8e" stroke-width="0.7" opacity="0.85"/><rect x="697.0" y="584.5" width="7" height="16" rx="3" fill="#cdcdcd" stroke="#8a8a8a" stroke-width="0.7"/><path d="M488.6 547.4L498.6 549.4L498.6 598.7L491.6 604.7L488.6 602.7Z" fill="#9a9a9a" stroke="#8a8a8a" stroke-width="0.6" /><path d="M498.6 593.7L518.6 595.7L518.6 599.7L498.6 598.7Z" fill="#d2d2d2" stroke="#8a8a8a" stroke-width="0.5" /><path d="M531.5 550.5L541.5 552.5L541.5 601.0L534.5 607.0L531.5 605.0Z" fill="#9a9a9a" stroke="#8a8a8a" stroke-width="0.6" /><path d="M541.5 596.0L561.5 598.0L561.5 602.0L541.5 601.0Z" fill="#d2d2d2" stroke="#8a8a8a" stroke-width="0.5" /><path d="M575.3 553.0L585.3 555.0L585.3 603.3L578.3 609.3L575.3 607.3Z" fill="#9a9a9a" stroke="#8a8a8a" stroke-width="0.6" /><path d="M585.3 598.3L605.3 600.3L605.3 604.3L585.3 603.3Z" fill="#d2d2d2" stroke="#8a8a8a" stroke-width="0.5" /><path d="M618.6 555.5L628.6 557.5L628.6 605.7L621.6 611.7L618.6 609.7Z" fill="#9a9a9a" stroke="#8a8a8a" stroke-width="0.6" /><path d="M628.6 600.7L648.6 602.7L648.6 606.7L628.6 605.7Z" fill="#d2d2d2" stroke="#8a8a8a" stroke-width="0.5" /><path d="M661.9 558.0L671.9 560.0L671.9 608.0L664.9 614.0L661.9 612.0Z" fill="#9a9a9a" stroke="#8a8a8a" stroke-width="0.6" /><path d="M671.9 603.0L691.9 605.0L691.9 609.0L671.9 608.0Z" fill="#d2d2d2" stroke="#8a8a8a" stroke-width="0.5" /><rect x="426" y="291.0" width="41" height="9" fill="#c2c2c2" stroke="#8a8a8a" stroke-width="0.6"/><rect x="438" y="271" width="9" height="20" rx="1" fill="#c2c2c2" stroke="#8a8a8a" stroke-width="0.6"/><rect x="437" y="276" width="11" height="7" fill="#c2c2c2" stroke="#8a8a8a" stroke-width="0.5"/><rect x="424" y="288.5" width="6" height="14" rx="2" fill="#c2c2c2" stroke="#8a8a8a" stroke-width="0.6"/><rect x="446" y="288.5" width="7" height="14" rx="1" fill="#c2c2c2" stroke="#8a8a8a" stroke-width="0.6"/><rect x="458" y="289.5" width="9" height="12" rx="1" fill="#c2c2c2" stroke="#8a8a8a" stroke-width="0.6"/><path d="M425.5 291.5L428.5 299.5" stroke="#8a8a8a" stroke-width="0.6" opacity="1"/><path d="M447.5 290.5L451.5 300.5" stroke="#8a8a8a" stroke-width="0.6" opacity="1"/><path d="M439.0 274.0L446.0 274.0" stroke="#8a8a8a" stroke-width="0.6" opacity="1"/><path d="M439.0 279.5L446.0 279.5" stroke="#8a8a8a" stroke-width="0.6" opacity="1"/><rect x="426" y="573.0" width="42" height="9" fill="#c2c2c2" stroke="#8a8a8a" stroke-width="0.6"/><rect x="438" y="553" width="9" height="19" rx="1" fill="#c2c2c2" stroke="#8a8a8a" stroke-width="0.6"/><rect x="437" y="558" width="11" height="7" fill="#c2c2c2" stroke="#8a8a8a" stroke-width="0.5"/><rect x="424" y="570.5" width="6" height="14" rx="2" fill="#c2c2c2" stroke="#8a8a8a" stroke-width="0.6"/><rect x="446" y="570.5" width="7" height="14" rx="1" fill="#c2c2c2" stroke="#8a8a8a" stroke-width="0.6"/><rect x="459" y="571.5" width="9" height="12" rx="1" fill="#c2c2c2" stroke="#8a8a8a" stroke-width="0.6"/><path d="M425.5 573.5L428.5 581.5" stroke="#8a8a8a" stroke-width="0.6" opacity="1"/><path d="M447.5 572.5L451.5 582.5" stroke="#8a8a8a" stroke-width="0.6" opacity="1"/><path d="M439.0 556.0L446.0 556.0" stroke="#8a8a8a" stroke-width="0.6" opacity="1"/><path d="M439.0 561.5L446.0 561.5" stroke="#8a8a8a" stroke-width="0.6" opacity="1"/><path d="M1026.0 356.0L1048.0 366.0L1048.0 598.0L1026.0 600.0Z" fill="#858585" stroke="#747474" stroke-width="0.6" /><path d="M1032.0 358.0L1032.0 596.0" stroke="#747474" stroke-width="0.6" opacity="1"/><path d="M1037.0 360.0L1037.0 596.0" stroke="#747474" stroke-width="0.6" opacity="1"/><path d="M826.0 324.0L1044.0 337.0L1042.0 364.0L826.0 356.0Z" fill="#8e8e8e" stroke="none" stroke-width="0.6" /><path d="M827.0 328.4L1042.0 341.5" stroke="#747474" stroke-width="0.6" opacity="0.6"/><path d="M827.0 330.0L1042.0 344.1" stroke="#747474" stroke-width="0.6" opacity="0.6"/><path d="M827.0 336.6L1042.0 349.2" stroke="#747474" stroke-width="0.6" opacity="0.6"/><path d="M827.0 340.3L1042.0 353.6" stroke="#747474" stroke-width="0.6" opacity="0.6"/><path d="M827.0 343.3L1042.0 355.5" stroke="#747474" stroke-width="0.6" opacity="0.6"/><path d="M827.0 347.3L1042.0 362.5" stroke="#747474" stroke-width="0.6" opacity="0.6"/><path d="M833.0 562.0L1046.0 571.0L1046.0 600.0L833.0 590.0Z" fill="#838383" stroke="none" stroke-width="0.6" /><path d="M857.0 563.0L857.0 585.0" stroke="#2f2f2f" stroke-width="1.6" opacity="1"/><path d="M827.7 563.0L827.7 583.0" stroke="#747474" stroke-width="0.8" opacity="1"/><path d="M831.7 563.0L831.7 583.0" stroke="#747474" stroke-width="0.8" opacity="1"/><path d="M901.6 565.0L901.6 587.0" stroke="#2f2f2f" stroke-width="1.6" opacity="1"/><path d="M871.0 565.0L871.0 585.0" stroke="#747474" stroke-width="0.8" opacity="1"/><path d="M875.0 565.0L875.0 585.0" stroke="#747474" stroke-width="0.8" opacity="1"/><path d="M944.7 567.0L944.7 589.0" stroke="#2f2f2f" stroke-width="1.6" opacity="1"/><path d="M915.0 567.0L915.0 587.0" stroke="#747474" stroke-width="0.8" opacity="1"/><path d="M919.0 567.0L919.0 587.0" stroke="#747474" stroke-width="0.8" opacity="1"/><path d="M987.8 569.0L987.8 591.0" stroke="#2f2f2f" stroke-width="1.6" opacity="1"/><path d="M958.5 569.0L958.5 589.0" stroke="#747474" stroke-width="0.8" opacity="1"/><path d="M962.5 569.0L962.5 589.0" stroke="#747474" stroke-width="0.8" opacity="1"/><path d="M1031.0 571.0L1031.0 593.0" stroke="#2f2f2f" stroke-width="1.6" opacity="1"/><path d="M1002.0 571.0L1002.0 591.0" stroke="#747474" stroke-width="0.8" opacity="1"/><path d="M1006.0 571.0L1006.0 591.0" stroke="#747474" stroke-width="0.8" opacity="1"/><path d="M854.0 342.0L862.0 348.0L862.0 566.0L854.0 563.0Z" fill="#858585" stroke="none" stroke-width="0.6" /><path d="M856.0 352.0L856.0 561.0" stroke="#747474" stroke-width="0.6" opacity="1"/><path d="M860.0 352.0L860.0 563.0" stroke="#747474" stroke-width="0.6" opacity="1"/><path d="M898.6 344.0L906.0 350.0L906.0 568.0L898.6 565.0Z" fill="#858585" stroke="none" stroke-width="0.6" /><path d="M900.6 354.0L900.6 563.0" stroke="#747474" stroke-width="0.6" opacity="1"/><path d="M904.0 354.0L904.0 565.0" stroke="#747474" stroke-width="0.6" opacity="1"/><path d="M941.7 346.0L949.5 352.0L949.5 570.0L941.7 567.0Z" fill="#858585" stroke="none" stroke-width="0.6" /><path d="M943.7 356.0L943.7 565.0" stroke="#747474" stroke-width="0.6" opacity="1"/><path d="M947.5 356.0L947.5 567.0" stroke="#747474" stroke-width="0.6" opacity="1"/><path d="M984.8 348.0L993.0 354.0L993.0 572.0L984.8 569.0Z" fill="#858585" stroke="none" stroke-width="0.6" /><path d="M986.8 358.0L986.8 567.0" stroke="#747474" stroke-width="0.6" opacity="1"/><path d="M991.0 358.0L991.0 569.0" stroke="#747474" stroke-width="0.6" opacity="1"/><rect x="818.7" y="346.0" width="35.3" height="217.0" rx="4" fill="#8f8f8f" stroke="#747474" stroke-width="0.7"/><rect x="819.7" y="348.0" width="6" height="213.0" fill="#858585" opacity="0.5"/><rect x="846.0" y="348.0" width="7" height="213.0" fill="#858585" opacity="0.5"/><rect x="862.0" y="348.0" width="36.6" height="217.0" rx="4" fill="#8f8f8f" stroke="#747474" stroke-width="0.7"/><rect x="863.0" y="350.0" width="6" height="213.0" fill="#858585" opacity="0.5"/><rect x="890.6" y="350.0" width="7" height="213.0" fill="#858585" opacity="0.5"/><rect x="906.0" y="350.0" width="35.7" height="217.0" rx="4" fill="#8f8f8f" stroke="#747474" stroke-width="0.7"/><rect x="907.0" y="352.0" width="6" height="213.0" fill="#858585" opacity="0.5"/><rect x="933.7" y="352.0" width="7" height="213.0" fill="#858585" opacity="0.5"/><rect x="949.5" y="352.0" width="35.3" height="217.0" rx="4" fill="#8f8f8f" stroke="#747474" stroke-width="0.7"/><rect x="950.5" y="354.0" width="6" height="213.0" fill="#858585" opacity="0.5"/><rect x="976.8" y="354.0" width="7" height="213.0" fill="#858585" opacity="0.5"/><rect x="993.0" y="354.0" width="35.0" height="217.0" rx="4" fill="#8f8f8f" stroke="#747474" stroke-width="0.7"/><rect x="994.0" y="356.0" width="6" height="213.0" fill="#858585" opacity="0.5"/><rect x="1020.0" y="356.0" width="7" height="213.0" fill="#858585" opacity="0.5"/><clipPath id="nc5"><rect x="826" y="291" width="216" height="120"/></clipPath><g clip-path="url(#nc5)"><rect x="810.2" y="335.4" width="9" height="28.5" fill="#8d8d8d" stroke="#747474" stroke-width="0.5" stroke-opacity="0.7"/><path d="M810.2 349.9L819.2 350.5" stroke="#747474" stroke-width="0.6" opacity="0.7"/><path d="M810.2 354.9L819.2 355.5" stroke="#747474" stroke-width="0.6" opacity="0.7"/><path d="M810.2 359.9L819.2 360.5" stroke="#747474" stroke-width="0.6" opacity="0.7"/><ellipse cx="814.7" cy="335.4" rx="17" ry="12.5" fill="#8d8d8d" stroke="#747474" stroke-width="0.8"/><path d="M804.5 326.0L824.9 326.5" stroke="#747474" stroke-width="0.6" opacity="0.75"/><path d="M801.0 329.1L828.4 329.6" stroke="#747474" stroke-width="0.6" opacity="0.75"/><path d="M799.2 332.2L830.2 332.7" stroke="#747474" stroke-width="0.6" opacity="0.75"/><path d="M798.7 335.4L830.7 335.9" stroke="#747474" stroke-width="0.6" opacity="0.75"/><path d="M799.2 338.5L830.2 339.0" stroke="#747474" stroke-width="0.6" opacity="0.75"/><path d="M801.0 341.6L828.4 342.1" stroke="#747474" stroke-width="0.6" opacity="0.75"/><path d="M804.5 344.7L824.9 345.2" stroke="#747474" stroke-width="0.6" opacity="0.75"/><path d="M802.7 325.9Q800.7 335.4 802.7 344.9H806.7V325.9Z" fill="#7a7a7a" opacity="0.9"/><rect x="853.5" y="337.8" width="9" height="28.5" fill="#8d8d8d" stroke="#747474" stroke-width="0.5" stroke-opacity="0.7"/><path d="M853.5 352.3L862.5 352.9" stroke="#747474" stroke-width="0.6" opacity="0.7"/><path d="M853.5 357.3L862.5 357.9" stroke="#747474" stroke-width="0.6" opacity="0.7"/><path d="M853.5 362.3L862.5 362.9" stroke="#747474" stroke-width="0.6" opacity="0.7"/><ellipse cx="858.0" cy="337.8" rx="17" ry="12.5" fill="#8d8d8d" stroke="#747474" stroke-width="0.8"/><path d="M847.8 328.4L868.2 328.9" stroke="#747474" stroke-width="0.6" opacity="0.75"/><path d="M844.3 331.6L871.7 332.1" stroke="#747474" stroke-width="0.6" opacity="0.75"/><path d="M842.5 334.7L873.5 335.2" stroke="#747474" stroke-width="0.6" opacity="0.75"/><path d="M842.0 337.8L874.0 338.3" stroke="#747474" stroke-width="0.6" opacity="0.75"/><path d="M842.5 340.9L873.5 341.4" stroke="#747474" stroke-width="0.6" opacity="0.75"/><path d="M844.3 344.1L871.7 344.6" stroke="#747474" stroke-width="0.6" opacity="0.75"/><path d="M847.8 347.2L868.2 347.7" stroke="#747474" stroke-width="0.6" opacity="0.75"/><path d="M846.0 328.3Q844.0 337.8 846.0 347.3H850.0V328.3Z" fill="#7a7a7a" opacity="0.9"/><path d="M868.5 329.1L866.5 339.1" stroke="#1e1e1e" stroke-width="1.3" opacity="1"/><rect x="897.8" y="340.3" width="9" height="28.5" fill="#8d8d8d" stroke="#747474" stroke-width="0.5" stroke-opacity="0.7"/><path d="M897.8 354.8L906.8 355.4" stroke="#747474" stroke-width="0.6" opacity="0.7"/><path d="M897.8 359.8L906.8 360.4" stroke="#747474" stroke-width="0.6" opacity="0.7"/><path d="M897.8 364.8L906.8 365.4" stroke="#747474" stroke-width="0.6" opacity="0.7"/><ellipse cx="902.3" cy="340.3" rx="17" ry="12.5" fill="#8d8d8d" stroke="#747474" stroke-width="0.8"/><path d="M892.1 330.9L912.5 331.4" stroke="#747474" stroke-width="0.6" opacity="0.75"/><path d="M888.6 334.1L916.0 334.6" stroke="#747474" stroke-width="0.6" opacity="0.75"/><path d="M886.8 337.2L917.8 337.7" stroke="#747474" stroke-width="0.6" opacity="0.75"/><path d="M886.3 340.3L918.3 340.8" stroke="#747474" stroke-width="0.6" opacity="0.75"/><path d="M886.8 343.4L917.8 343.9" stroke="#747474" stroke-width="0.6" opacity="0.75"/><path d="M888.6 346.6L916.0 347.1" stroke="#747474" stroke-width="0.6" opacity="0.75"/><path d="M892.1 349.7L912.5 350.2" stroke="#747474" stroke-width="0.6" opacity="0.75"/><path d="M890.3 330.8Q888.3 340.3 890.3 349.8H894.3V330.8Z" fill="#7a7a7a" opacity="0.9"/><path d="M912.8 331.6L910.8 341.6" stroke="#1e1e1e" stroke-width="1.3" opacity="1"/><rect x="941.1" y="342.7" width="9" height="28.5" fill="#8d8d8d" stroke="#747474" stroke-width="0.5" stroke-opacity="0.7"/><path d="M941.1 357.2L950.1 357.8" stroke="#747474" stroke-width="0.6" opacity="0.7"/><path d="M941.1 362.2L950.1 362.8" stroke="#747474" stroke-width="0.6" opacity="0.7"/><path d="M941.1 367.2L950.1 367.8" stroke="#747474" stroke-width="0.6" opacity="0.7"/><ellipse cx="945.6" cy="342.7" rx="17" ry="12.5" fill="#8d8d8d" stroke="#747474" stroke-width="0.8"/><path d="M935.4 333.4L955.8 333.9" stroke="#747474" stroke-width="0.6" opacity="0.75"/><path d="M931.9 336.5L959.3 337.0" stroke="#747474" stroke-width="0.6" opacity="0.75"/><path d="M930.1 339.6L961.1 340.1" stroke="#747474" stroke-width="0.6" opacity="0.75"/><path d="M929.6 342.7L961.6 343.2" stroke="#747474" stroke-width="0.6" opacity="0.75"/><path d="M930.1 345.9L961.1 346.4" stroke="#747474" stroke-width="0.6" opacity="0.75"/><path d="M931.9 349.0L959.3 349.5" stroke="#747474" stroke-width="0.6" opacity="0.75"/><path d="M935.4 352.1L955.8 352.6" stroke="#747474" stroke-width="0.6" opacity="0.75"/><path d="M933.6 333.2Q931.6 342.7 933.6 352.2H937.6V333.2Z" fill="#7a7a7a" opacity="0.9"/><path d="M956.1 334.0L954.1 344.0" stroke="#1e1e1e" stroke-width="1.3" opacity="1"/><rect x="984.4" y="345.2" width="9" height="28.5" fill="#8d8d8d" stroke="#747474" stroke-width="0.5" stroke-opacity="0.7"/><path d="M984.4 359.7L993.4 360.3" stroke="#747474" stroke-width="0.6" opacity="0.7"/><path d="M984.4 364.7L993.4 365.3" stroke="#747474" stroke-width="0.6" opacity="0.7"/><path d="M984.4 369.7L993.4 370.3" stroke="#747474" stroke-width="0.6" opacity="0.7"/><ellipse cx="988.9" cy="345.2" rx="17" ry="12.5" fill="#8d8d8d" stroke="#747474" stroke-width="0.8"/><path d="M978.7 335.8L999.1 336.3" stroke="#747474" stroke-width="0.6" opacity="0.75"/><path d="M975.2 338.9L1002.6 339.4" stroke="#747474" stroke-width="0.6" opacity="0.75"/><path d="M973.4 342.0L1004.4 342.5" stroke="#747474" stroke-width="0.6" opacity="0.75"/><path d="M972.9 345.2L1004.9 345.7" stroke="#747474" stroke-width="0.6" opacity="0.75"/><path d="M973.4 348.3L1004.4 348.8" stroke="#747474" stroke-width="0.6" opacity="0.75"/><path d="M975.2 351.4L1002.6 351.9" stroke="#747474" stroke-width="0.6" opacity="0.75"/><path d="M978.7 354.5L999.1 355.0" stroke="#747474" stroke-width="0.6" opacity="0.75"/><path d="M976.9 335.7Q974.9 345.2 976.9 354.7H980.9V335.7Z" fill="#7a7a7a" opacity="0.9"/><path d="M999.4 336.4L997.4 346.4" stroke="#1e1e1e" stroke-width="1.3" opacity="1"/><rect x="1027.5" y="347.6" width="9" height="28.5" fill="#8d8d8d" stroke="#747474" stroke-width="0.5" stroke-opacity="0.7"/><path d="M1027.5 362.1L1036.5 362.7" stroke="#747474" stroke-width="0.6" opacity="0.7"/><path d="M1027.5 367.1L1036.5 367.7" stroke="#747474" stroke-width="0.6" opacity="0.7"/><path d="M1027.5 372.1L1036.5 372.7" stroke="#747474" stroke-width="0.6" opacity="0.7"/><ellipse cx="1032.0" cy="347.6" rx="17" ry="12.5" fill="#8d8d8d" stroke="#747474" stroke-width="0.8"/><path d="M1021.8 338.2L1042.2 338.7" stroke="#747474" stroke-width="0.6" opacity="0.75"/><path d="M1018.3 341.3L1045.7 341.8" stroke="#747474" stroke-width="0.6" opacity="0.75"/><path d="M1016.5 344.5L1047.5 345.0" stroke="#747474" stroke-width="0.6" opacity="0.75"/><path d="M1016.0 347.6L1048.0 348.1" stroke="#747474" stroke-width="0.6" opacity="0.75"/><path d="M1016.5 350.7L1047.5 351.2" stroke="#747474" stroke-width="0.6" opacity="0.75"/><path d="M1018.3 353.8L1045.7 354.3" stroke="#747474" stroke-width="0.6" opacity="0.75"/><path d="M1021.8 357.0L1042.2 357.5" stroke="#747474" stroke-width="0.6" opacity="0.75"/><path d="M1020.0 338.1Q1018.0 347.6 1020.0 357.1H1024.0V338.1Z" fill="#7a7a7a" opacity="0.9"/></g><path d="M820.0 291.0L1045.0 304.0L1048.0 308.0L1048.0 336.0L1045.0 339.0L820.0 326.0L817.0 323.0L817.0 294.0Z" fill="#8b8b8b" stroke="#747474" stroke-width="0.7" /><path d="M818.0 294.2L1047.0 307.3" stroke="#747474" stroke-width="0.7" opacity="0.85"/><path d="M818.0 299.2L1047.0 312.8" stroke="#747474" stroke-width="0.7" opacity="0.85"/><path d="M818.0 300.8L1047.0 315.3" stroke="#747474" stroke-width="0.7" opacity="0.85"/><path d="M818.0 307.8L1047.0 318.5" stroke="#747474" stroke-width="0.7" opacity="0.85"/><path d="M818.0 309.9L1047.0 323.8" stroke="#747474" stroke-width="0.7" opacity="0.85"/><path d="M818.0 313.8L1047.0 327.4" stroke="#747474" stroke-width="0.7" opacity="0.85"/><path d="M818.0 320.2L1047.0 332.8" stroke="#747474" stroke-width="0.7" opacity="0.85"/><path d="M818.0 324.0L1047.0 335.0" stroke="#747474" stroke-width="0.7" opacity="0.85"/><path d="M820.0 291.5L1045.0 304.5L1045.0 307.5L820.0 294.5Z" fill="#7c7c7c" stroke="none" stroke-width="0" opacity="0.8"/><path d="M820.0 321.5L1045.0 334.5L1045.0 338.5L820.0 325.5Z" fill="#7c7c7c" stroke="none" stroke-width="0" opacity="0.8"/><path d="M1034.0 303.7L1045.0 304.5L1047.5 308.0L1047.5 336.0L1045.0 338.5L1034.0 337.7Z" fill="#838383" stroke="none" stroke-width="0.6" /><path d="M860.0 293.4L860.0 328.4" stroke="#737373" stroke-width="2.0" opacity="1"/><path d="M903.5 295.9L903.5 330.9" stroke="#737373" stroke-width="2.0" opacity="1"/><path d="M946.7 298.3L946.7 333.3" stroke="#737373" stroke-width="2.0" opacity="1"/><path d="M990.0 300.7L990.0 335.7" stroke="#737373" stroke-width="2.0" opacity="1"/><path d="M1034.0 303.2L1034.0 338.2" stroke="#737373" stroke-width="2.0" opacity="1"/><rect x="1046.0" y="314.5" width="6" height="14" rx="2.5" fill="#8b8b8b" stroke="#747474" stroke-width="0.7"/><path d="M820.0 581.5L1047.0 595.0L1050.0 598.0L1050.0 616.5L1047.0 619.5L820.0 606.0L817.0 603.0L817.0 584.5Z" fill="#8b8b8b" stroke="#747474" stroke-width="0.7" /><path d="M818.0 584.5L1049.0 595.5" stroke="#747474" stroke-width="0.7" opacity="0.85"/><path d="M818.0 586.7L1049.0 600.7" stroke="#747474" stroke-width="0.7" opacity="0.85"/><path d="M818.0 591.6L1049.0 606.4" stroke="#747474" stroke-width="0.7" opacity="0.85"/><path d="M818.0 595.6L1049.0 609.2" stroke="#747474" stroke-width="0.7" opacity="0.85"/><path d="M818.0 600.4L1049.0 611.7" stroke="#747474" stroke-width="0.7" opacity="0.85"/><path d="M818.0 602.1L1049.0 616.4" stroke="#747474" stroke-width="0.7" opacity="0.85"/><rect x="1046.0" y="599.2" width="7" height="16" rx="3" fill="#8b8b8b" stroke="#747474" stroke-width="0.7"/><path d="M836.7 561.0L846.7 563.0L846.7 613.2L839.7 619.2L836.7 617.2Z" fill="#7c7c7c" stroke="#747474" stroke-width="0.6" /><path d="M846.7 608.2L866.7 610.2L866.7 614.2L846.7 613.2Z" fill="#8d8d8d" stroke="#747474" stroke-width="0.5" /><path d="M880.0 563.0L890.0 565.0L890.0 615.7L883.0 621.7L880.0 619.7Z" fill="#7c7c7c" stroke="#747474" stroke-width="0.6" /><path d="M890.0 610.7L910.0 612.7L910.0 616.7L890.0 615.7Z" fill="#8d8d8d" stroke="#747474" stroke-width="0.5" /><path d="M924.0 565.0L934.0 567.0L934.0 618.3L927.0 624.3L924.0 622.3Z" fill="#7c7c7c" stroke="#747474" stroke-width="0.6" /><path d="M934.0 613.3L954.0 615.3L954.0 619.3L934.0 618.3Z" fill="#8d8d8d" stroke="#747474" stroke-width="0.5" /><path d="M967.5 567.0L977.5 569.0L977.5 620.8L970.5 626.8L967.5 624.8Z" fill="#7c7c7c" stroke="#747474" stroke-width="0.6" /><path d="M977.5 615.8L997.5 617.8L997.5 621.8L977.5 620.8Z" fill="#8d8d8d" stroke="#747474" stroke-width="0.5" /><path d="M1011.0 569.0L1021.0 571.0L1021.0 623.3L1014.0 629.3L1011.0 627.3Z" fill="#7c7c7c" stroke="#747474" stroke-width="0.6" /><path d="M1021.0 618.3L1041.0 620.3L1041.0 624.3L1021.0 623.3Z" fill="#8d8d8d" stroke="#747474" stroke-width="0.5" /><rect x="775" y="304.0" width="42" height="9" fill="#888888" stroke="#747474" stroke-width="0.6"/><rect x="786" y="284" width="10" height="22" rx="1" fill="#888888" stroke="#747474" stroke-width="0.6"/><rect x="785" y="289" width="12" height="7" fill="#888888" stroke="#747474" stroke-width="0.5"/><rect x="773" y="301.5" width="6" height="14" rx="2" fill="#888888" stroke="#747474" stroke-width="0.6"/><rect x="795" y="301.5" width="7" height="14" rx="1" fill="#888888" stroke="#747474" stroke-width="0.6"/><rect x="808" y="302.5" width="9" height="12" rx="1" fill="#888888" stroke="#747474" stroke-width="0.6"/><path d="M774.5 304.5L777.5 312.5" stroke="#747474" stroke-width="0.6" opacity="1"/><path d="M796.5 303.5L800.5 313.5" stroke="#747474" stroke-width="0.6" opacity="1"/><path d="M787.0 287.0L795.0 287.0" stroke="#747474" stroke-width="0.6" opacity="1"/><path d="M787.0 292.5L795.0 292.5" stroke="#747474" stroke-width="0.6" opacity="1"/><rect x="775" y="587.0" width="42" height="9" fill="#888888" stroke="#747474" stroke-width="0.6"/><rect x="786" y="568" width="10" height="20" rx="1" fill="#888888" stroke="#747474" stroke-width="0.6"/><rect x="785" y="573" width="12" height="7" fill="#888888" stroke="#747474" stroke-width="0.5"/><rect x="773" y="584.5" width="6" height="14" rx="2" fill="#888888" stroke="#747474" stroke-width="0.6"/><rect x="795" y="584.5" width="7" height="14" rx="1" fill="#888888" stroke="#747474" stroke-width="0.6"/><rect x="808" y="585.5" width="9" height="12" rx="1" fill="#888888" stroke="#747474" stroke-width="0.6"/><path d="M774.5 587.5L777.5 595.5" stroke="#747474" stroke-width="0.6" opacity="1"/><path d="M796.5 586.5L800.5 596.5" stroke="#747474" stroke-width="0.6" opacity="1"/><path d="M787.0 571.0L795.0 571.0" stroke="#747474" stroke-width="0.6" opacity="1"/><path d="M787.0 576.5L795.0 576.5" stroke="#747474" stroke-width="0.6" opacity="1"/></svg>
<div style="left:9px;top:146px;width:20px;height:13px;background:#464648;border-radius:7px"></div>
<div style="left:33px;top:146px;width:111px;height:13px;background:#464648;border-radius:7px"></div>
<div style="left:148px;top:146px;width:74px;height:13px;background:#464648;border-radius:7px"></div>
<div style="left:225px;top:146px;width:123px;height:13px;background:#464648;border-radius:7px"></div>
<svg width="1560" height="877" style="position:absolute;left:0;top:0"><path d="M17 152.5H22M19.5 150V155" stroke="#6e6e6e" stroke-width="1"/><circle cx="1473" cy="227" r="69.5" fill="none" stroke="#8a8a8a" stroke-width="1"/><circle cx="1473" cy="227" r="45.7" fill="none" stroke="#8a8a8a" stroke-width="1"/><path d="M1403.5 227H1542.5M1473 157.5V296.5" stroke="#7c7c7c" stroke-width="1"/><circle cx="1460" cy="188" r="4.8" fill="#a07e5c"/><path d="M172.5 130.5L179.5 137.5M179.5 130.5L172.5 137.5" stroke="#e0e0e0" stroke-width="1.1"/><path d="M1545.5 131H1553.5L1549.5 135Z" fill="#e6e6e6"/><path d="M1190 115.5H1195L1192.5 118.5Z" fill="#e0e0e0"/></svg>
<div style="left:0px;top:816px;width:1560px;height:18px;background:#4c4c4c;"></div>
<div style="left:3px;top:817px;width:1554px;height:16px;background:#4d4d4d;"></div>
<div style="left:2px;top:816px;width:1556px;height:1px;background:#6e6e6e;"></div>
<div style="left:0px;top:833px;width:1560px;height:1px;background:#6e6e6e;"></div>
<div style="left:2px;top:124px;width:1px;height:710px;background:#6e6e6e;"></div>
<div style="left:1557px;top:124px;width:1px;height:710px;background:#6e6e6e;"></div>
<div style="left:2px;top:141px;width:1556px;height:1px;background:#6e6e6e;"></div>
<div style="left:33px;top:817px;width:43px;height:15px;background:#7b7b7b;"></div>
<div style="left:76px;top:817px;width:19px;height:15px;background:#474747;box-sizing:border-box;border:1px solid #5f5f5f"></div>
<div style="left:97px;top:817px;width:19px;height:15px;background:#474747;box-sizing:border-box;border:1px solid #5f5f5f"></div>
<div style="left:118px;top:817px;width:19px;height:15px;background:#474747;box-sizing:border-box;border:1px solid #5f5f5f"></div>
<div style="left:139px;top:817px;width:19px;height:15px;background:#474747;box-sizing:border-box;border:1px solid #5f5f5f"></div>
<svg width="1560" height="877" style="position:absolute;left:0;top:0"><rect x="5.5" y="819.5" width="12" height="12" fill="none" stroke="#cfcfcf" stroke-width="1"/><path d="M6 823.5H17" stroke="#7fb0ea" stroke-width="1.4"/><path d="M6 827H17" stroke="#cfcfcf" stroke-width="0.8"/></svg>
<div style="left:0px;top:835px;width:1560px;height:22px;background:#4c4c4c;"></div>
<div style="left:5px;top:838px;width:58px;height:18px;background:#7b7b7b;"></div>
<div style="left:0px;top:857px;width:1560px;height:20px;background:#4c4c4c;"></div>
<div style="left:0px;top:875px;width:1560px;height:1px;background:#7a7a7a;"></div>
<div style="left:140px;top:857px;width:252px;height:17px;background:#56657b;box-sizing:border-box;border:1px solid #6f87a8"></div>
<div style="left:594px;top:857px;width:98px;height:17px;background:#56657b;box-sizing:border-box;border:1px solid #6f87a8"></div>
<div style="left:1232px;top:857px;width:72px;height:17px;background:#56657b;box-sizing:border-box;border:1px solid #6f87a8"></div>
<div style="left:1431px;top:858px;width:13px;height:14px;background:#6aa6ee;"></div>
<div style="left:181px;top:859px;width:1px;height:14px;background:#6a84a8;"></div>
<div style="left:245px;top:859px;width:1px;height:14px;background:#6a84a8;"></div>
<div style="left:323px;top:859px;width:1px;height:14px;background:#6a84a8;"></div>
<div style="left:624px;top:859px;width:1px;height:14px;background:#6a84a8;"></div>
<div style="left:1256px;top:859px;width:1px;height:14px;background:#6a84a8;"></div>
<div style="left:1280px;top:859px;width:1px;height:14px;background:#6a84a8;"></div>
<div style="left:107px;top:859px;width:1px;height:14px;background:#5f5f5f;"></div>
<div style="left:457px;top:859px;width:1px;height:14px;background:#5f5f5f;"></div>
<div style="left:497px;top:859px;width:1px;height:14px;background:#5f5f5f;"></div>
<div style="left:558px;top:859px;width:1px;height:14px;background:#5f5f5f;"></div>
<div style="left:590px;top:859px;width:1px;height:14px;background:#5f5f5f;"></div>
<div style="left:1087px;top:859px;width:1px;height:14px;background:#5f5f5f;"></div>
<div style="left:1105px;top:859px;width:1px;height:14px;background:#5f5f5f;"></div>
<div style="left:1197px;top:859px;width:1px;height:14px;background:#5f5f5f;"></div>
<div style="left:1214px;top:859px;width:1px;height:14px;background:#5f5f5f;"></div>
<div style="left:1376px;top:859px;width:1px;height:14px;background:#5f5f5f;"></div>
<div style="left:1400px;top:859px;width:1px;height:14px;background:#5f5f5f;"></div>
<div style="left:1423px;top:859px;width:1px;height:14px;background:#5f5f5f;"></div>
<div style="left:1447px;top:859px;width:1px;height:14px;background:#5f5f5f;"></div>
<div style="left:1470px;top:859px;width:1px;height:14px;background:#5f5f5f;"></div>
<div style="left:1494px;top:859px;width:1px;height:14px;background:#5f5f5f;"></div>
<div style="left:1535px;top:859px;width:1px;height:14px;background:#5f5f5f;"></div>
<svg width="1560" height="877" style="position:absolute;left:0;top:0"><path d="M1092 868.5L1096 864.5M1094.5 866.5A2 2 0 0 1 1097.5 863.5L1098.5 862.5A2 2 0 0 1 1101.5 865.5L1100.5 866.5M1095.5 868.5L1094.5 869.5A2 2 0 0 1 1091.5 866.5L1092.5 865.5" fill="none" stroke="#cfcfcf" stroke-width="1"/><rect x="1108" y="860.5" width="10" height="9" fill="#d9d9d9"/><path d="M1113 868H1119.5L1116.25 871.5Z" fill="#f0f0f0" stroke="#444" stroke-width="0.6"/><path d="M1193 865.5H1197" stroke="#777" stroke-width="1"/><rect x="1198.5" y="860.5" width="5" height="6" rx="2" fill="#f0d070"/><path d="M1198 860V872H1210M1206 865L1211 870L1209 871L1212 873" fill="none" stroke="#cfcfcf" stroke-width="0.9"/><path d="M1204 864L1204 872L1206.5 869.5L1209 873" fill="#f0f0f0"/><circle cx="1222.5" cy="864" r="3.8" fill="#e8e8e8"/><rect x="1220.5" y="867.5" width="4" height="4" fill="#bdbdbd"/><circle cx="1244" cy="866" r="5.5" fill="none" stroke="#d03838" stroke-width="1.6"/><path d="M1243 861.5V869L1245 867L1246.5 870" stroke="#f0f0f0" stroke-width="1" fill="#f0f0f0"/><path d="M1264 860V870L1266.5 867.5L1268.5 871" stroke="#f0f0f0" stroke-width="1" fill="#f0f0f0"/><rect x="1268" y="866" width="7" height="5" fill="none" stroke="#e0e0e0" stroke-width="0.9"/><path d="M1287 861V872H1299M1285 863L1287 860.5L1289 863" fill="none" stroke="#e0e0e0" stroke-width="0.9"/><path d="M1294 860L1291.5 866H1294L1292 871" stroke="#e0e0e0" stroke-width="1" fill="none"/><path d="M1384 866L1386 864L1388 867V859.5A1 1 0 0 1 1390 859.5V864V858.5A1 1 0 0 1 1392 858.5V864V859.5A1 1 0 0 1 1394 859.5V864.5V861A1 1 0 0 1 1396 861V868Q1396 873 1391 873H1389Z" fill="#f0f0f0"/><circle cx="1413" cy="864" r="4" fill="#bcd8f5" stroke="#f0f0f0" stroke-width="1.2"/><path d="M1416 867L1420 871" stroke="#f0f0f0" stroke-width="1.8"/><circle cx="1436.5" cy="864" r="3.5" fill="#9cc8f8" stroke="#2a4a78" stroke-width="1.1"/><path d="M1439 866.8L1442 869.8" stroke="#2a4a78" stroke-width="1.5"/><rect x="1454" y="859.5" width="10" height="10" fill="none" stroke="#9cc4ee" stroke-width="1"/><circle cx="1462" cy="867" r="3" fill="#5a5a5a" stroke="#f0f0f0" stroke-width="1"/><path d="M1464 869L1467 872" stroke="#f0f0f0" stroke-width="1.4"/><ellipse cx="1484" cy="866" rx="6" ry="2.5" fill="none" stroke="#cfcfcf" stroke-width="0.9"/><path d="M1484 859V873" stroke="#cfcfcf" stroke-width="1"/><path d="M1503 866A4.5 4.5 0 0 1 1511 863M1511.5 866A4.5 4.5 0 0 1 1503.5 869" fill="none" stroke="#6cc04a" stroke-width="1.6"/><path d="M1510 861L1512.5 864L1509 864.5Z" fill="#6cc04a"/><path d="M1504.5 871L1502 868L1505.5 867.5Z" fill="#6cc04a"/><rect x="1519" y="859.5" width="8" height="7" fill="none" stroke="#e0e0e0" stroke-width="1"/><rect x="1523" y="864" width="7" height="7" fill="#5a5a5a" stroke="#e0e0e0" stroke-width="1"/><rect x="1541.5" y="859.5" width="13" height="12" fill="none" stroke="#7db7f0" stroke-width="1.2"/><rect x="1544" y="862" width="8" height="7" fill="#7db7f0"/></svg>
<svg width="1560" height="877" viewBox="0 0 1560 877" style="position:absolute;left:0;top:0"><defs>
<linearGradient id="gw" x1="0" y1="0" x2="0" y2="1"><stop offset="0" stop-color="#f2f2f2"/><stop offset="1" stop-color="#c9c9c9"/></linearGradient>
<linearGradient id="gwh" x1="0" y1="0" x2="1" y2="0"><stop offset="0" stop-color="#dadada"/><stop offset="0.45" stop-color="#f4f4f4"/><stop offset="1" stop-color="#b8b8b8"/></linearGradient>
<linearGradient id="gd" x1="0" y1="0" x2="0" y2="1"><stop offset="0" stop-color="#d0d0d0"/><stop offset="1" stop-color="#a9a9a9"/></linearGradient>
<linearGradient id="gt" x1="0" y1="0" x2="0" y2="1"><stop offset="0" stop-color="#fafafa"/><stop offset="1" stop-color="#e2e2e2"/></linearGradient>
<linearGradient id="gb" x1="0" y1="0" x2="0" y2="1"><stop offset="0" stop-color="#a9d1ff"/><stop offset="1" stop-color="#5f9ee8"/></linearGradient>
<linearGradient id="gbh" x1="0" y1="0" x2="1" y2="0"><stop offset="0" stop-color="#5d98e0"/><stop offset="0.5" stop-color="#a8cdf8"/><stop offset="1" stop-color="#5d98e0"/></linearGradient>
<linearGradient id="gbd" x1="0" y1="0" x2="0" y2="1"><stop offset="0" stop-color="#7db2ee"/><stop offset="1" stop-color="#3f7ccc"/></linearGradient>
<radialGradient id="gs" cx="0.42" cy="0.35" r="0.65"><stop offset="0" stop-color="#ffffff"/><stop offset="0.5" stop-color="#d4d4d4"/><stop offset="1" stop-color="#8e8e8e"/></radialGradient>
<radialGradient id="gsb" cx="0.35" cy="0.35" r="0.7"><stop offset="0" stop-color="#b9dcff"/><stop offset="1" stop-color="#3a7ad0"/></radialGradient>
<radialGradient id="gtor" cx="0.5" cy="0.5" r="0.5"><stop offset="0.38" stop-color="#7a7a7a"/><stop offset="0.55" stop-color="#c8c8c8"/><stop offset="0.75" stop-color="#cfcfcf"/><stop offset="1" stop-color="#9a9a9a"/></radialGradient>
<linearGradient id="glogo" x1="0" y1="0" x2="0" y2="1"><stop offset="0" stop-color="#3fdcf2"/><stop offset="1" stop-color="#4ea6e6"/></linearGradient></defs><path d="M12 13H27.5Q28.5 13 28.5 14V27Q28.5 35 20 35H9.5Q8 35 8 33.5V21Q8 13 16 13Z" fill="#2f8fd8"/><path d="M12.5 13.5H27.5Q28 13.5 28 14.5V27Q28 34.5 20 34.5H9.5Q8.5 34.5 8.5 33V21Q8.5 13.5 16 13.5Z" fill="url(#glogo)"/><path d="M20 13.5V34.5" stroke="#2a7cb8" stroke-width="1.3"/><path d="M19.4 20.8Q15.5 21 15.3 24.5Q15.5 28 19.4 28Z" fill="#33424c"/><path d="M42 12H49L52.3 15.3V25H42Z" fill="#f2f2f2"/><path d="M49 12V15.3H52.3" fill="#cfcfcf"/><path d="M59 14.5H64L65 15.5H70V17H59Z" fill="#d5d5d5"/><path d="M59 24H70L72.5 17.5H61.5Z" fill="#6ea5ea"/><path d="M59 17V24L61.5 17.5Z" fill="#9cc2f0"/><rect x="79" y="13" width="12" height="11.5" rx="1" fill="#6ea5ea"/><rect x="82" y="13" width="6" height="3.5" fill="#f2f2f2"/><rect x="81.5" y="19" width="7" height="5.5" fill="#f5f5f5"/><rect x="83.5" y="20.5" width="3" height="3" fill="#6ea5ea"/><rect x="101" y="12" width="10.8" height="10.5" rx="1" fill="#6ea5ea"/><rect x="103.5" y="12" width="5" height="2.5" fill="#e6e6e6"/><rect x="98" y="17" width="7.5" height="8" fill="#fafafa" stroke="#555" stroke-width="0.5"/><path d="M99.5 21L101.3 23L104.5 18.8" stroke="#333" stroke-width="1" fill="none"/><path d="M120 18.3L124 15V17.2H129.4V19.4H124V21.6Z" fill="#6ea5ea"/><path d="M136 17.5H141L138.5 20.3Z" fill="#cfcfcf"/><path d="M157.9 18.3L153.9 15V17.2H148.6V19.4H153.9V21.6Z" fill="#f5f5f5"/><path d="M165 17.5H169.5L167.25 20.3Z" fill="#bdbdbd"/><rect x="177" y="12" width="8.5" height="4" fill="#f2f2f2"/><rect x="174" y="16" width="14.4" height="6" rx="1" fill="#6ea5ea"/><rect x="177" y="20.5" width="8.5" height="4.5" fill="#f2f2f2"/><rect x="205" y="17" width="4.5" height="1" fill="#aaa"/><path d="M205 19H209.7L207.35 22Z" fill="#aaa"/><rect x="1391" y="8.5" width="16.5" height="15.5" fill="#5a6a80" stroke="#6a8ab4" stroke-width="1"/><rect x="1392.5" y="11" width="13.5" height="2.5" fill="#e6a060"/><path d="M1394 14V23M1399 14V23" stroke="#cfcfcf" stroke-width="1"/><rect x="1399.5" y="14" width="6" height="9" fill="#333"/><path d="M1415.5 12.8Q1416 10.5 1418.3 10.5Q1420.8 10.6 1420.8 13Q1420.8 14.7 1418.5 15.8V18" fill="none" stroke="#bdbdbd" stroke-width="1.1"/><circle cx="1418.5" cy="20.5" r="0.8" fill="#bdbdbd"/><path d="M1428.5 14.5H1433.5L1431 17.5Z" fill="#e6e6e6"/><path d="M1456 12.5H1464.5" stroke="#1a1a1a" stroke-width="1"/><path d="M1494.5 10.5V9.5Q1494.5 8.5 1495.5 8.5H1499.5Q1500.5 8.5 1500.5 9.5V13.5Q1500.5 14.5 1499.5 14.5H1499" fill="none" stroke="#1a1a1a" stroke-width="1"/><rect x="1492.5" y="10.5" width="6.5" height="6.5" rx="1" fill="none" stroke="#1a1a1a" stroke-width="1"/><path d="M1530 8.5L1538.5 17M1538.5 8.5L1530 17" stroke="#1a1a1a" stroke-width="1.1"/><path d="M18 53L23 48H34L29 53Z" fill="url(#gt)" stroke="none"/><path d="M29 53L34 48V59.5L29 64.5Z" fill="url(#gd)" stroke="none"/><rect x="18" y="53" width="11" height="11.5" fill="url(#gw)" stroke="none"/><rect x="12" y="59.5" width="13" height="12.5" fill="#f4f4f4" stroke="#9a9a9a" stroke-width="0.6"/><rect x="12.5" y="60" width="12" height="1.6" fill="#7fa9dc"/><path d="M14 63.5H23M14 66H23M14 68.5H23" stroke="#555" stroke-width="0.9"/><circle cx="33" cy="69.3" r="3" fill="#f4ae6a" stroke="#3e3a36" stroke-width="0.7"/><path d="M12 81.7L16.5 77.2H33.5L29 81.7Z" fill="url(#gt)" stroke="none"/><path d="M29 81.7L33.5 77.2V92.7L29 97.2Z" fill="url(#gd)" stroke="none"/><rect x="12" y="81.7" width="17" height="15.5" fill="url(#gw)" stroke="none"/><circle cx="33" cy="97.7" r="3" fill="#f4ae6a" stroke="#3e3a36" stroke-width="0.7"/><path d="M121.5 49H131L145 60V66.5H135.5L121.5 55Z" fill="#cfcfcf"/><path d="M121.5 49H131L145 60H135.5Z" fill="#e9e9e9"/><path d="M131 49H141L145 52.5V55.5H135Z" fill="#dcdcdc"/><path d="M131 49H141L145 52.5H135Z" fill="#f0f0f0"/><path d="M121 60H128L135.5 66.5H125L121 63Z" fill="#d2d2d2"/><path d="M121 60H128L132 63.3H121Z" fill="#efefef"/><path d="M135.5 60V66.5M121.5 55L135.5 60" fill="none" stroke="#9d9d9d" stroke-width="0.6"/><circle cx="142.7" cy="68.6" r="3" fill="#f4ae6a" stroke="#3e3a36" stroke-width="0.7"/><path d="M121 86C127 85 132 81 134 76C139 77 143 79 145 82C146 88 143 95 139 99C135 98 132 96 131 94C129 91 125 88 121 86Z" fill="url(#gs)"/><path d="M126 86.5C131 85 136 80 137.5 77M129 90C134 88 139 83 141 79M124 82C128 86 132 92 135 98M129 79C133 84 137 90 140 96M133 77C137 82 141 88 143 93" stroke="#6a6a6a" stroke-width="0.7" fill="none"/><circle cx="142.7" cy="98.4" r="3" fill="#f4ae6a" stroke="#3e3a36" stroke-width="0.7"/><path d="M220 56L225 51H241.3L236.3 56Z" fill="url(#gt)" stroke="none"/><path d="M236.3 56L241.3 51V66.5L236.3 71.5Z" fill="url(#gd)" stroke="none"/><rect x="220" y="56" width="16.3" height="15.5" fill="url(#gw)" stroke="none"/><path d="M267.4 50.3L256.3 67.6A11 4.5 0 0 0 278.4 67.6Z" fill="url(#gwh)"/><path d="M304.9 50.3L293.3 66.2L304.9 73.9Z" fill="#e6e6e6"/><path d="M304.9 50.3L317.4 66.2L304.9 73.9Z" fill="#b9b9b9"/><circle cx="341.9" cy="61.2" r="11" fill="url(#gtor)"/><circle cx="341.9" cy="60.3" r="5.2" fill="#5a5a5a"/><path d="M222.5 87V103A7.75 3 0 0 0 238 103V87Z" fill="url(#gwh)"/><ellipse cx="230.25" cy="87" rx="7.75" ry="3" fill="#f0f0f0" stroke="#b0b0b0" stroke-width="0.5"/><circle cx="267.6" cy="94.6" r="11" fill="url(#gs)"/><path d="M295 85V105H316.4Z" fill="#d8d8d8"/><path d="M295 85L299 84L317.5 101L316.4 105Z" fill="#eeeeee"/><path d="M316.4 105L317.5 101" stroke="#999" stroke-width="0.6"/><path d="M334.2 83L338 82L350.5 87V104L346 106V89.5Z" fill="#e8e8e8"/><path d="M334.2 83V98L342 100V87.5Z" fill="#bdbdbd"/><path d="M346 89.5V106L350.5 104V87Z" fill="#cfcfcf"/><path d="M363 51V104" stroke="#808080" stroke-width="1"/><path d="M374 67.2L379 72.6H393.5L389.4 67.2Z" fill="#f0f0f0"/><path d="M389.4 51.1L393.7 54.4V72.4L389.4 67.2Z" fill="url(#gbd)"/><rect x="374" y="51.1" width="15.4" height="16.1" fill="url(#gb)"/><path d="M381.6 66V58M379.2 60.5L381.6 57.4L384 60.5" stroke="#1f3e66" stroke-width="1.3" fill="none"/><path d="M410.9 50H432V63L425 69H416.5L410.9 63Z" fill="url(#gbd)"/><path d="M413 50.5H430L424 63H418.5Z" fill="#a9cbf2"/><circle cx="420.7" cy="66.8" r="4.7" fill="#ececec" stroke="#4f6b8f" stroke-width="0.8"/><path d="M446.3 66.5L452 61H465.5L470.7 66.5L458.7 73.7Z" fill="#5a5a5a"/><path d="M446.3 66.5L452 61.5L458.7 64.5V73.7Z" fill="#e4e4e4"/><path d="M458.7 64.5L465.5 61.5L470.7 66.5L458.7 73.7Z" fill="#b9b9b9"/><path d="M458.7 49.6L450.5 62L458.7 64Z" fill="#a7cbf5"/><path d="M458.7 49.6L466.7 62L458.7 64Z" fill="#6ea6ea"/><path d="M483.8 61.5L497 52L507.4 58.5L495 67.5Z" fill="url(#gt)"/><path d="M483.8 61.5V66L495 71.4V67.5Z" fill="#7db2ef"/><path d="M495 67.5L507.4 58.5V63L495 71.4Z" fill="#5d99e2"/><g fill="none" stroke="#7fb3ee" stroke-width="0.9"><rect x="523" y="57" width="15" height="15"/><rect x="528" y="52.5" width="15" height="15"/><path d="M523 57L528 52.5M538 57L543 52.5M538 72L543 67.5M523 72L528 67.5"/></g><path d="M575.3 58L578 54.8H598.3L595.5 58Z" fill="#ececec"/><rect x="575.3" y="58" width="7" height="18" fill="url(#gwh)"/><path d="M582.3 69H587L584 76H582.3Z" fill="#b5b5b5"/><rect x="582.3" y="58" width="13.2" height="11" fill="#74adf2"/><path d="M595.5 58L598.3 54.8V66L595.5 69Z" fill="#4f8ad6"/><path d="M582.3 58L585 54.8H598.3L595.5 58Z" fill="#a6cdf8"/><path d="M373.5 88.5A11 5 0 0 1 394.5 88.5" fill="none" stroke="#c4c4c4" stroke-width="0.9"/><path d="M371.8 87.5L376.3 85.8L375 89.5Z" fill="#d0d0d0"/><path d="M371.8 94Q383.7 86.5 395.6 94V101.5Q383.7 97 371.8 101.5Z" fill="#b6d5f8"/><path d="M371.8 94.5Q383.7 101 389.5 98.5V105.5Q383.7 107 371.8 101.5Z" fill="url(#gbh)"/><path d="M389.5 98.5L395.6 94V101.5L389.5 105.5Z" fill="#f2f2f2" stroke="#4a4a4a" stroke-width="0.5"/><path d="M416 83H423L417.5 89H432.5V96L426 101.5V96H411V89Z" fill="url(#gb)"/><path d="M411 89L416 83H423L417.5 89Z" fill="#b8d8fb"/><path d="M426 96L432.5 89.5V96L426 101.5Z" fill="#4f8ad6"/><rect x="418" y="97.5" width="7.5" height="8.5" fill="#ececec"/><path d="M451.5 86V102A8.5 3.5 0 0 0 468.5 102V86Z" fill="url(#gwh)"/><ellipse cx="460" cy="86" rx="8.5" ry="3.3" fill="#e9e9e9"/><path d="M446 89.5H465.5L471.5 100H452Z" fill="none" stroke="#d6d6d6" stroke-width="0.8"/><ellipse cx="460" cy="94.5" rx="8.3" ry="3" fill="#f5ae66" stroke="#6c5a48" stroke-width="0.5"/><path d="M483.7 104V92.5M482 95L483.7 92L485.4 95" stroke="#bdbdbd" stroke-width="1" fill="none"/><path d="M487 95.0L490.5 91.5H501.5L498 95.0Z" fill="url(#gt)" stroke="none"/><path d="M498 95.0L501.5 91.5V105.0L498 108.5Z" fill="url(#gd)" stroke="none"/><rect x="487" y="95.0" width="11" height="13.5" fill="url(#gw)" stroke="none"/><path d="M487 95V86L492 82V91.5Z" fill="#6fa9ee"/><rect x="522.7" y="83.9" width="20.7" height="21.2" fill="none" stroke="#76acec" stroke-width="1.1"/><rect x="526" y="87.5" width="14.2" height="14.4" fill="url(#gt)"/><path d="M631.3 52H640.5L644.2 57V62H631.3Z" fill="url(#gw)"/><path d="M631.3 52.5C633 49 636 48.3 638 48.3C642 48.5 644.2 52 644.2 57L640.5 52.5Z" fill="#e6a565"/><path d="M640.5 52H631.3" stroke="#ccc" stroke-width="0.5"/><path d="M640.5 53L644.2 58V62L640.5 62Z" fill="#bdbdbd"/><path d="M631.3 71.5L634.5 67.8H638.5L644.2 72.5V77.5L640.5 80.7H631.3Z" fill="url(#gw)"/><path d="M638.5 67.8L644.2 72.5L640.5 76L635 71.5Z" fill="#eda764"/><path d="M640.5 76L644.2 72.5V77.5L640.5 80.7Z" fill="#b5b5b5"/><path d="M635 91L641.5 88.5M635 94.5L641.5 92M635 98L641.5 95.5" stroke="#80b8f2" stroke-width="1.6"/><path d="M635 90L641.5 89.5M635 93.5L641.5 93M635 97L641.5 96.5M635 100.5L641 100" stroke="#3d6ea8" stroke-width="0.8"/><circle cx="720.9" cy="54.8" r="4.5" fill="#5584bd" stroke="#8fb9e8" stroke-width="0.9"/><circle cx="725.5" cy="54.8" r="4.5" fill="#5584bd" stroke="#8fb9e8" stroke-width="0.9"/><path d="M723.2 51.0A4.5 4.5 0 0 1 723.2 58.599999999999994" fill="none" stroke="#8cbcf0" stroke-width="0.6"/><circle cx="720.9" cy="74.4" r="4.5" fill="#5584bd" stroke="#8fb9e8" stroke-width="0.9"/><circle cx="725.5" cy="74.4" r="4.5" fill="#5e5e5e" stroke="#aaaaaa" stroke-width="0.9"/><circle cx="720.9" cy="93.6" r="4.5" fill="none" stroke="#aaaaaa" stroke-width="0.9"/><circle cx="725.5" cy="93.6" r="4.5" fill="none" stroke="#aaaaaa" stroke-width="0.9"/><path d="M723.2 90.0A4.5 4.5 0 0 1 723.2 97.19999999999999A4.5 4.5 0 0 1 723.2 90.0Z" fill="#4f86c9"/><rect x="807.6" y="51" width="3.7" height="3.6" fill="#e6e6e6"/><rect x="814" y="50.3" width="3.9" height="3.7" fill="#e6e6e6"/><rect x="807.6" y="56.9" width="3.7" height="3.8" fill="#6eaaf0"/><rect x="814" y="56.9" width="3.9" height="3.8" fill="#e6e6e6"/><rect x="812" y="68.5" width="3.3" height="3.3" fill="#e0e0e0"/><rect x="816.2" y="71" width="3" height="3.3" fill="#e0e0e0"/><rect x="807" y="72" width="3.3" height="3.3" fill="#e0e0e0"/><rect x="816.2" y="76.2" width="3" height="3.3" fill="#e0e0e0"/><rect x="807" y="76.6" width="3.3" height="3.3" fill="#6eaaf0"/><rect x="811.4" y="78.2" width="3.3" height="3" fill="#e0e0e0"/><path d="M808.5 89.5H810.6V101H806.8V96.5H808.5Z" fill="#f0f0f0"/><path d="M815 89.5H817V96.5H819V101H815Z" fill="#f0f0f0"/><rect x="812.5" y="88" width="1.1" height="14" fill="#b08a66"/><path d="M953 62V51.5L957 48.6V58.5" fill="none" stroke="#cfcfcf" stroke-width="0.9"/><path d="M952.7 62.2L956 57.8H966L962.3 62.2Z" fill="#f3ab63"/><path d="M963 48.5V53.5M960.5 51H965.5" stroke="#e0e0e0" stroke-width="1"/><path d="M957 72L961 68.5V77.5L957 81Z" fill="#d8d8d8"/><path d="M952.5 74.7H955M958 74.7H966" stroke="#e79a5a" stroke-width="0.9"/><path d="M963.5 68.5V72.5M961.5 70.5H965.5" stroke="#e0e0e0" stroke-width="0.9"/><path d="M957.5 92L958.7 95.3L962 96.5L958.7 97.7L957.5 101L956.3 97.7L953 96.5L956.3 95.3Z" fill="#d08c55" stroke="#eea468" stroke-width="0.6"/><path d="M963 87.5V92.5M960.5 90H965.5" stroke="#e0e0e0" stroke-width="1"/><path d="M1089.5 56.5H1078.7V75.6H1097.8V64.5" fill="none" stroke="#bdbdbd" stroke-width="1"/><path d="M1090.8 63.5L1097.2 57.1M1092.5 56.6H1097.7V61.8" fill="none" stroke="#f0a868" stroke-width="1.1"/><path d="M1139.7 50.4L1149.6 56V66.8L1139.7 73.7L1128.8 66.8V56Z" fill="none" stroke="#c9c9c9" stroke-width="0.8"/><path d="M1139.7 50.4V61.7" stroke="#7bb7e6" stroke-width="1"/><path d="M1139.7 61.7L1128.8 66.8" stroke="#7ed36b" stroke-width="1"/><path d="M1139.7 61.7L1149.6 66.8" stroke="#e56a62" stroke-width="1"/><rect x="1137.7" y="48.4" width="4" height="4" fill="#3f79b8" stroke="#7bb7e6" stroke-width="0.7"/><rect x="1126.8" y="64.8" width="4" height="4" fill="#5d5d5d" stroke="#7ed36b" stroke-width="0.8"/><rect x="1147.6" y="64.8" width="4" height="4" fill="#a04848" stroke="#e56a62" stroke-width="0.8"/><rect x="1137.7" y="59.7" width="4" height="4" fill="#5d5d5d" stroke="#e6e6e6" stroke-width="0.8"/><circle cx="1177.7" cy="61.3" r="12" fill="none" stroke="#7ed36b" stroke-width="0.9"/><ellipse cx="1177.7" cy="61.3" rx="6" ry="12" fill="none" stroke="#e06058" stroke-width="1"/><ellipse cx="1177.7" cy="61.3" rx="12" ry="5.8" fill="none" stroke="#6fb0e6" stroke-width="1"/><circle cx="1177.7" cy="61.5" r="0.6" fill="#ddd"/><path d="M1140.8 85.8L1129.9 102.6H1150.7Z" fill="none" stroke="#c8847c" stroke-width="0.8"/><path d="M1140.8 85.8L1129.9 102.6" stroke="#6fb0e6" stroke-width="0.9"/><path d="M1129.9 102.6H1150.7" stroke="#a5d26b" stroke-width="0.9"/><path d="M1140.8 85.8V96.7M1140.8 96.7L1129.9 102.6M1140.8 96.7L1150.7 102.6" stroke="#999" stroke-width="0.7"/><rect x="1138.8" y="83.8" width="4" height="4" fill="#3f79b8" stroke="#7bb7e6" stroke-width="0.7"/><rect x="1127.9" y="100.6" width="4" height="4" fill="#5d5d5d" stroke="#7ed36b" stroke-width="0.8"/><rect x="1148.7" y="100.6" width="4" height="4" fill="#a04848" stroke="#e56a62" stroke-width="0.8"/><rect x="1138.8" y="94.7" width="4" height="4" fill="#5d5d5d" stroke="#e6e6e6" stroke-width="0.8"/><rect x="1164.8" y="81.4" width="1.2" height="25.6" fill="#eda86a"/><path d="M1169 88.5L1171.5 86H1183.0L1180.5 88.5Z" fill="url(#gt)" stroke="none"/><path d="M1180.5 88.5L1183.0 86V93L1180.5 95.5Z" fill="url(#gd)" stroke="none"/><rect x="1169" y="88.5" width="11.5" height="7" fill="url(#gw)" stroke="none"/><path d="M1169 99.0L1171.5 96.5H1188.5L1186 99.0Z" fill="url(#gt)" stroke="none"/><path d="M1186 99.0L1188.5 96.5V103.0L1186 105.5Z" fill="url(#gd)" stroke="none"/><rect x="1169" y="99.0" width="17" height="6.5" fill="url(#gw)" stroke="none"/><rect x="1209" y="49.3" width="21" height="8" fill="url(#gt)"/><rect x="1216" y="57" width="7.5" height="14" fill="url(#gwh)"/><path d="M1216 57.3V70" stroke="#e3a26b" stroke-width="0.7"/><rect x="1206.9" y="57.5" width="8.6" height="15.5" fill="#6fadf5"/><rect x="1224.2" y="57.5" width="8.6" height="15.5" fill="#6fadf5"/><path d="M1243 55.5L1247.5 50.5L1252 54.5L1247.5 59.5Z" fill="#6fadf5"/><rect x="1248" y="56" width="7" height="6" fill="url(#gt)"/><path d="M1242.5 62L1255 49" stroke="#e3a26b" stroke-width="0.9"/><rect x="1243.5" y="69" width="4" height="11" fill="#9b9b9b"/><rect x="1248.5" y="67.5" width="1" height="14" fill="#e3a26b"/><circle cx="1252.5" cy="74.5" r="3.3" fill="#6fadf5"/><rect x="1242.5" y="89.5" width="5.3" height="7" fill="#e2e2e2"/><rect x="1248.5" y="87.5" width="1" height="14" fill="#e3a26b"/><rect x="1250" y="89.5" width="6" height="8" fill="#6fadf5"/><rect x="1210" y="96.5" width="9" height="9.5" fill="url(#gt)"/><rect x="1219" y="85" width="1" height="21" fill="#e3a26b"/><rect x="1220.5" y="83.5" width="9.5" height="9.5" fill="#6fadf5"/><path d="M1230 83.5L1232 85V93L1230 94Z" fill="#4f8ad6"/><path d="M1273 52.5L1276 49H1289.8L1287 52.5Z" fill="#ececec"/><path d="M1287 52.5L1289.8 49V62.5L1287 65.5Z" fill="#bbbbbb"/><path d="M1273 52.5H1287V62H1280.5V68H1273Z" fill="url(#gw)"/><path d="M1280.5 62H1283L1283 66.5L1280.5 68Z" fill="#aaa"/><path d="M1288 66.5A5 5 0 0 1 1297.5 66.5M1297.5 70.7A5 5 0 0 1 1288 70.7" fill="none" stroke="#6aa6ea" stroke-width="1.4"/><path d="M1296 65L1299 67L1296 68Z" fill="#6aa6ea"/><path d="M1289.5 72.5L1286.5 70.5L1289.5 69.5Z" fill="#6aa6ea"/><path d="M1285 89.5L1288 86.5H1297L1294 89.5Z" fill="url(#gt)" stroke="none"/><path d="M1294 89.5L1297 86.5V95.5L1294 98.5Z" fill="url(#gd)" stroke="none"/><rect x="1285" y="89.5" width="9" height="9" fill="url(#gw)" stroke="none"/><path d="M1275 94.8L1278.3 91.5H1289.3L1286 94.8Z" fill="url(#gt)" stroke="none"/><path d="M1286 94.8L1289.3 91.5V102.5L1286 105.8Z" fill="url(#gd)" stroke="none"/><rect x="1275" y="94.8" width="11" height="11" fill="url(#gw)" stroke="none"/><path d="M1285 95V91.3H1288.8" stroke="#e3a26b" stroke-width="1" fill="none"/><path d="M1323.7 54.5L1326.2 52H1333.7L1331.2 54.5Z" fill="url(#gt)" stroke="none"/><path d="M1331.2 54.5L1333.7 52V60L1331.2 62.5Z" fill="url(#gd)" stroke="none"/><rect x="1323.7" y="54.5" width="7.5" height="8" fill="url(#gw)" stroke="none"/><path d="M1315.8 63.9L1321.5 58H1341.8L1336.5 63.9Z" fill="#6fadf5"/><rect x="1323.7" y="65" width="7.5" height="7.3" fill="url(#gw)"/><path d="M1331.2 65L1333.5 63.9V70.5L1331.2 72.3Z" fill="#a9a9a9"/><rect x="1355.6" y="48.5" width="3.8" height="13.5" fill="#6fadf5"/><rect x="1352" y="52" width="11.8" height="6" fill="#6fadf5"/><rect x="1355.6" y="52" width="3.8" height="6" fill="#dedede"/><rect x="1354" y="69.5" width="5.8" height="5" fill="url(#gt)"/><rect x="1354" y="75.8" width="5.8" height="5.2" fill="url(#gt)"/><rect x="1354" y="75.8" width="5.8" height="1.4" fill="#6fadf5"/><path d="M1321 88.5L1324 85.5H1335L1332 88.5Z" fill="url(#gt)" stroke="none"/><path d="M1332 88.5L1335 85.5V96.0L1332 99.0Z" fill="url(#gd)" stroke="none"/><rect x="1321" y="88.5" width="11" height="10.5" fill="url(#gw)" stroke="none"/><path d="M1321 105.2L1325 100.5H1335.2L1331 105.2Z" fill="#6fadf5"/><rect x="1351" y="88" width="7.5" height="7.5" fill="#cfcfcf"/><path d="M1351.5 94L1357 88.5M1351.5 91L1354.5 88.5M1354 95L1358 91" stroke="#5a5a5a" stroke-width="0.7"/><rect x="1357" y="93.5" width="7" height="7.5" fill="#d8c8b0"/><path d="M1357.5 99.5L1363.5 94M1357.5 96.5L1360.5 94M1360 100.5L1363.5 97.5" stroke="#7a4a20" stroke-width="0.8"/><path d="M1391.4 49.2A11 11 0 0 0 1391.4 71.2Z" fill="url(#gs)"/><path d="M1391.4 49.2A11 11 0 0 1 1391.4 71.2Z" fill="#5c9ae8"/><path d="M1394.4 50.2C1397.4 54.2 1401.4 56.2 1401.9 58.2M1391.4 59.2C1395.4 58.2 1399.4 60.2 1402.4 62.2M1392.4 66.2C1395.4 65.2 1399.4 66.2 1400.9 66.7M1396.4 51.2C1396.4 57.2 1395.4 63.2 1396.4 70.2" fill="none" stroke="#2d5f9f" stroke-width="0.8"/><path d="M1391.4 49.2V71.2" stroke="#3a4a5a" stroke-width="0.9"/><path d="M1391.4 78.8A11 11 0 0 0 1391.4 100.8Z" fill="url(#gs)"/><path d="M1391.4 78.8A11 11 0 0 1 1391.4 100.8Z" fill="url(#gsb)"/><path d="M1382.4 83.8C1385.4 84.8 1388.4 84.8 1391.4 84.8M1380.4 90.8C1384.4 89.8 1388.4 89.8 1391.4 89.8M1382.4 95.8C1385.4 94.8 1388.4 94.8 1391.4 94.8M1386.4 79.8C1384.4 85.8 1384.4 93.8 1386.4 99.8" fill="none" stroke="#555" stroke-width="0.8"/><path d="M1391.4 78.8V100.8" stroke="#3a4a5a" stroke-width="0.9"/></svg>
<div style="left:1375px;top:126px;width:120px;height:33px;background:linear-gradient(#fafafa,#ececec);box-sizing:border-box;border:1px solid #a0a0a0;box-shadow:1px 1px 2px rgba(0,0,0,0.35)"></div>
<div class="t" style="left:574.20px;top:9.00px;font-size:9.8px;color:#1a1a1a;font-weight:400;transform:scaleX(0.9868);">Платформа nanoCAD x64 23 - не для коммерческого использования Преобразование моделей.dwg*</div>
<div class="t" style="left:48.30px;top:28.74px;font-size:9.4px;color:#e0e0e0;font-weight:400;transform:scaleX(0.9419);">Главная</div>
<div class="t" style="left:106.70px;top:28.74px;font-size:9.4px;color:#e0e0e0;font-weight:400;transform:scaleX(0.9992);">Построение</div>
<div class="t" style="left:183.30px;top:28.74px;font-size:9.4px;color:#e0e0e0;font-weight:400;transform:scaleX(0.9302);">Вставка</div>
<div class="t" style="left:240.80px;top:28.74px;font-size:9.4px;color:#e0e0e0;font-weight:400;transform:scaleX(0.9872);">Оформление</div>
<div class="t" style="left:323.20px;top:28.74px;font-size:9.4px;color:#e0e0e0;font-weight:400;transform:scaleX(0.9816);">Зависимости</div>
<div class="t" style="left:404.50px;top:28.74px;font-size:9.4px;color:#e0e0e0;font-weight:400;transform:scaleX(0.9840);">3D-инструменты</div>
<div class="t" style="left:499.90px;top:28.74px;font-size:9.4px;color:#e0e0e0;font-weight:400;transform:scaleX(0.9232);">Вид</div>
<div class="t" style="left:539.00px;top:28.74px;font-size:9.4px;color:#e0e0e0;font-weight:400;transform:scaleX(1.0175);">Настройки</div>
<div class="t" style="left:609.50px;top:28.74px;font-size:9.4px;color:#e0e0e0;font-weight:400;transform:scaleX(0.9500);">Вывод</div>
<div class="t" style="left:659.40px;top:28.74px;font-size:9.4px;color:#e0e0e0;font-weight:400;transform:scaleX(0.9009);">Растр</div>
<div class="t" style="left:706.80px;top:28.74px;font-size:9.4px;color:#e0e0e0;font-weight:400;transform:scaleX(1.0102);">Облака точек</div>
<div class="t" style="left:790.30px;top:28.74px;font-size:9.4px;color:#e0e0e0;font-weight:400;transform:scaleX(1.0422);">Топоплан</div>
<div class="t" style="left:52.50px;top:107.54px;font-size:9.4px;color:#bdbdbd;font-weight:400;transform:scaleX(1.0040);">Режимы моделирования</div>
<div class="t" style="left:363.80px;top:107.54px;font-size:9.4px;color:#bdbdbd;font-weight:400;transform:scaleX(1.0080);">Прямое моделирование</div>
<div class="t" style="left:646.20px;top:107.54px;font-size:9.4px;color:#bdbdbd;font-weight:400;transform:scaleX(0.9534);">Элементы</div>
<div class="t" style="left:716.80px;top:107.54px;font-size:9.4px;color:#bdbdbd;font-weight:400;transform:scaleX(0.9843);">Булевы операции</div>
<div class="t" style="left:853.80px;top:107.54px;font-size:9.4px;color:#bdbdbd;font-weight:400;transform:scaleX(0.9630);">Массивы</div>
<div class="t" style="left:963.70px;top:107.54px;font-size:9.4px;color:#bdbdbd;font-weight:400;transform:scaleX(0.9834);">Вспомогательные</div>
<div class="t" style="left:1072.30px;top:107.54px;font-size:9.4px;color:#bdbdbd;font-weight:400;transform:scaleX(0.9159);">Вставка</div>
<div class="t" style="left:1128.50px;top:107.54px;font-size:9.4px;color:#bdbdbd;font-weight:400;transform:scaleX(1.0193);">Манипуляции</div>
<div class="t" style="left:1203.40px;top:107.54px;font-size:9.4px;color:#bdbdbd;font-weight:400;transform:scaleX(0.9781);">Зависимости</div>
<div class="t" style="left:1270.40px;top:107.54px;font-size:9.4px;color:#bdbdbd;font-weight:400;transform:scaleX(0.9413);">Сервис</div>
<div class="t" style="left:1320.30px;top:107.54px;font-size:9.4px;color:#bdbdbd;font-weight:400;transform:scaleX(0.9673);">2D-виды</div>
<div class="t" style="left:1401.70px;top:107.54px;font-size:9.4px;color:#f0f0f0;font-weight:400;transform:scaleX(1.0020);">Конвертация</div>
<div class="t" style="left:41.60px;top:53.31px;font-size:9.5px;color:#e2e2e2;font-weight:400;transform:scaleX(0.9920);">Параметрика</div>
<div class="t" style="left:41.60px;top:82.61px;font-size:9.5px;color:#f0f0f0;font-weight:400;transform:scaleX(0.9899);">Прямое</div>
<div class="t" style="left:151.20px;top:53.31px;font-size:9.5px;color:#e2e2e2;font-weight:400;transform:scaleX(0.9752);">Листовое</div>
<div class="t" style="left:151.60px;top:82.61px;font-size:9.5px;color:#e2e2e2;font-weight:400;transform:scaleX(0.9215);">Сети</div>
<div class="t" style="left:555.20px;top:80.21px;font-size:9.5px;color:#e2e2e2;font-weight:400;transform:scaleX(0.9798);">Редактировать</div>
<div class="t" style="left:577.00px;top:90.21px;font-size:9.5px;color:#e2e2e2;font-weight:400;transform:scaleX(0.9431);">тело</div>
<div class="t" style="left:647.40px;top:48.61px;font-size:9.5px;color:#e2e2e2;font-weight:400;transform:scaleX(1.0057);">Сопряжение</div>
<div class="t" style="left:646.80px;top:67.71px;font-size:9.5px;color:#e2e2e2;font-weight:400;transform:scaleX(0.9069);">Фаска</div>
<div class="t" style="left:647.40px;top:86.91px;font-size:9.5px;color:#e2e2e2;font-weight:400;transform:scaleX(0.9284);">Резьба</div>
<div class="t" style="left:732.70px;top:48.61px;font-size:9.5px;color:#e2e2e2;font-weight:400;transform:scaleX(0.9927);">Объединение</div>
<div class="t" style="left:732.70px;top:67.71px;font-size:9.5px;color:#e2e2e2;font-weight:400;transform:scaleX(0.9655);">Вычитание</div>
<div class="t" style="left:732.70px;top:86.91px;font-size:9.5px;color:#e2e2e2;font-weight:400;transform:scaleX(0.9715);">Пересечение</div>
<div class="t" style="left:822.70px;top:48.41px;font-size:9.5px;color:#e2e2e2;font-weight:400;transform:scaleX(0.9877);">3D-прямоугольный массив</div>
<div class="t" style="left:822.70px;top:67.71px;font-size:9.5px;color:#e2e2e2;font-weight:400;transform:scaleX(0.9890);">3D-круговой массив</div>
<div class="t" style="left:822.70px;top:86.91px;font-size:9.5px;color:#e2e2e2;font-weight:400;transform:scaleX(0.9525);">3D-зеркало</div>
<div class="t" style="left:968.50px;top:48.41px;font-size:9.5px;color:#e2e2e2;font-weight:400;transform:scaleX(0.9755);">Рабочая плоскость</div>
<div class="t" style="left:968.50px;top:67.71px;font-size:9.5px;color:#e2e2e2;font-weight:400;transform:scaleX(0.9686);">Рабочая ось</div>
<div class="t" style="left:968.50px;top:86.91px;font-size:9.5px;color:#e2e2e2;font-weight:400;transform:scaleX(0.9913);">Рабочая точка</div>
<div class="t" style="left:1066.80px;top:79.91px;font-size:9.5px;color:#e2e2e2;font-weight:400;transform:scaleX(1.0170);">Добавить</div>
<div class="t" style="left:1064.00px;top:90.21px;font-size:9.5px;color:#e2e2e2;font-weight:400;transform:scaleX(1.0379);">компонент</div>
<div class="t" style="left:1409.00px;top:53.01px;font-size:9.5px;color:#e2e2e2;font-weight:400;transform:scaleX(0.9284);">Тела в сеть</div>
<div class="t" style="left:1409.00px;top:82.21px;font-size:9.5px;color:#f0f0f0;font-weight:400;transform:scaleX(0.9371);">Сеть в 3D-тело</div>
<div class="t" style="left:20.00px;top:127.31px;font-size:9.5px;color:#f2f2f2;font-weight:400;transform:scaleX(1.0085);">Преобразование моделей.dwg*</div>
<div class="t" style="left:40.60px;top:146.38px;font-size:9.3px;color:#8a8a8a;font-weight:400;transform:scaleX(0.9846);">Пользовательский вид</div>
<div class="t" style="left:155.90px;top:146.38px;font-size:9.3px;color:#8a8a8a;font-weight:400;transform:scaleX(0.9310);">Реалистичный</div>
<div class="t" style="left:233.30px;top:146.38px;font-size:9.3px;color:#8a8a8a;font-weight:400;transform:scaleX(0.9377);">— нет связанных видов —</div>
<div class="t" style="left:39.70px;top:817.51px;font-size:9.5px;color:#f0f0f0;font-weight:400;transform:scaleX(0.9472);">Модель</div>
<div class="t" style="left:81.40px;top:817.51px;font-size:9.5px;color:#c0c0c0;font-weight:400;transform:scaleX(0.8863);">A4</div>
<div class="t" style="left:102.60px;top:817.51px;font-size:9.5px;color:#c0c0c0;font-weight:400;transform:scaleX(0.8777);">A3</div>
<div class="t" style="left:123.70px;top:817.51px;font-size:9.5px;color:#c0c0c0;font-weight:400;transform:scaleX(0.8863);">A2</div>
<div class="t" style="left:144.60px;top:817.51px;font-size:9.5px;color:#c0c0c0;font-weight:400;transform:scaleX(0.8519);">A1</div>
<div class="t" style="left:11.80px;top:840.21px;font-size:9.5px;color:#e6e6e6;font-weight:400;transform:scaleX(0.9554);">Команда:</div>
<div class="t" style="left:3.60px;top:858.37px;font-size:9.6px;color:#e6e6e6;font-weight:400;transform:scaleX(0.9171);">60.5804,-171.2080,0.000</div>
<div class="t" style="left:114.70px;top:859.08px;font-size:9.3px;color:#e0e0e0;font-weight:400;transform:scaleX(0.9412);">ШАГ</div>
<div class="t" style="left:148.00px;top:859.08px;font-size:9.3px;color:#f0f0f0;font-weight:400;transform:scaleX(0.8603);">СЕТКА</div>
<div class="t" style="left:189.00px;top:859.08px;font-size:9.3px;color:#f0f0f0;font-weight:400;transform:scaleX(0.8976);">оПРИВЯЗКА</div>
<div class="t" style="left:252.00px;top:859.08px;font-size:9.3px;color:#f0f0f0;font-weight:400;transform:scaleX(0.9267);">3D оПРИВЯЗКА</div>
<div class="t" style="left:331.00px;top:859.08px;font-size:9.3px;color:#f0f0f0;font-weight:400;transform:scaleX(0.8938);">ОТС-ОБЪЕКТ</div>
<div class="t" style="left:400.00px;top:859.08px;font-size:9.3px;color:#e0e0e0;font-weight:400;transform:scaleX(0.9179);">ОТС-ПОЛЯР</div>
<div class="t" style="left:466.00px;top:859.08px;font-size:9.3px;color:#e0e0e0;font-weight:400;transform:scaleX(0.9406);">ОРТО</div>
<div class="t" style="left:504.00px;top:859.08px;font-size:9.3px;color:#e0e0e0;font-weight:400;transform:scaleX(0.9747);">ДИН-ВВОД</div>
<div class="t" style="left:566.00px;top:859.08px;font-size:9.3px;color:#e0e0e0;font-weight:400;transform:scaleX(0.9263);">ИЗО</div>
<div class="t" style="left:601.00px;top:859.08px;font-size:9.3px;color:#f0f0f0;font-weight:400;transform:scaleX(0.8524);">ВЕС</div>
<div class="t" style="left:631.00px;top:859.08px;font-size:9.3px;color:#f0f0f0;font-weight:400;transform:scaleX(0.9131);">ШТРИХОВКА</div>
<div class="t" style="left:1049.40px;top:859.08px;font-size:9.3px;color:#e0e0e0;font-weight:400;transform:scaleX(0.9523);">МОДЕЛЬ</div>
<div class="t" style="left:1325.60px;top:859.08px;font-size:9.3px;color:#e0e0e0;font-weight:400;transform:scaleX(0.9317);">m1:100</div>
<div class="t" style="left:1380.00px;top:127.14px;font-size:9.4px;color:#4a4a4a;font-weight:400;transform:scaleX(0.9893);-webkit-text-stroke:0.35px #4a4a4a;">Преобразовать в 3D тело</div>
<div class="t" style="left:1380.00px;top:142.58px;font-size:9.3px;color:#6a6a6a;font-weight:400;transform:scaleX(0.9945);">Преобразовать в 3D тело</div>
</body></html>
